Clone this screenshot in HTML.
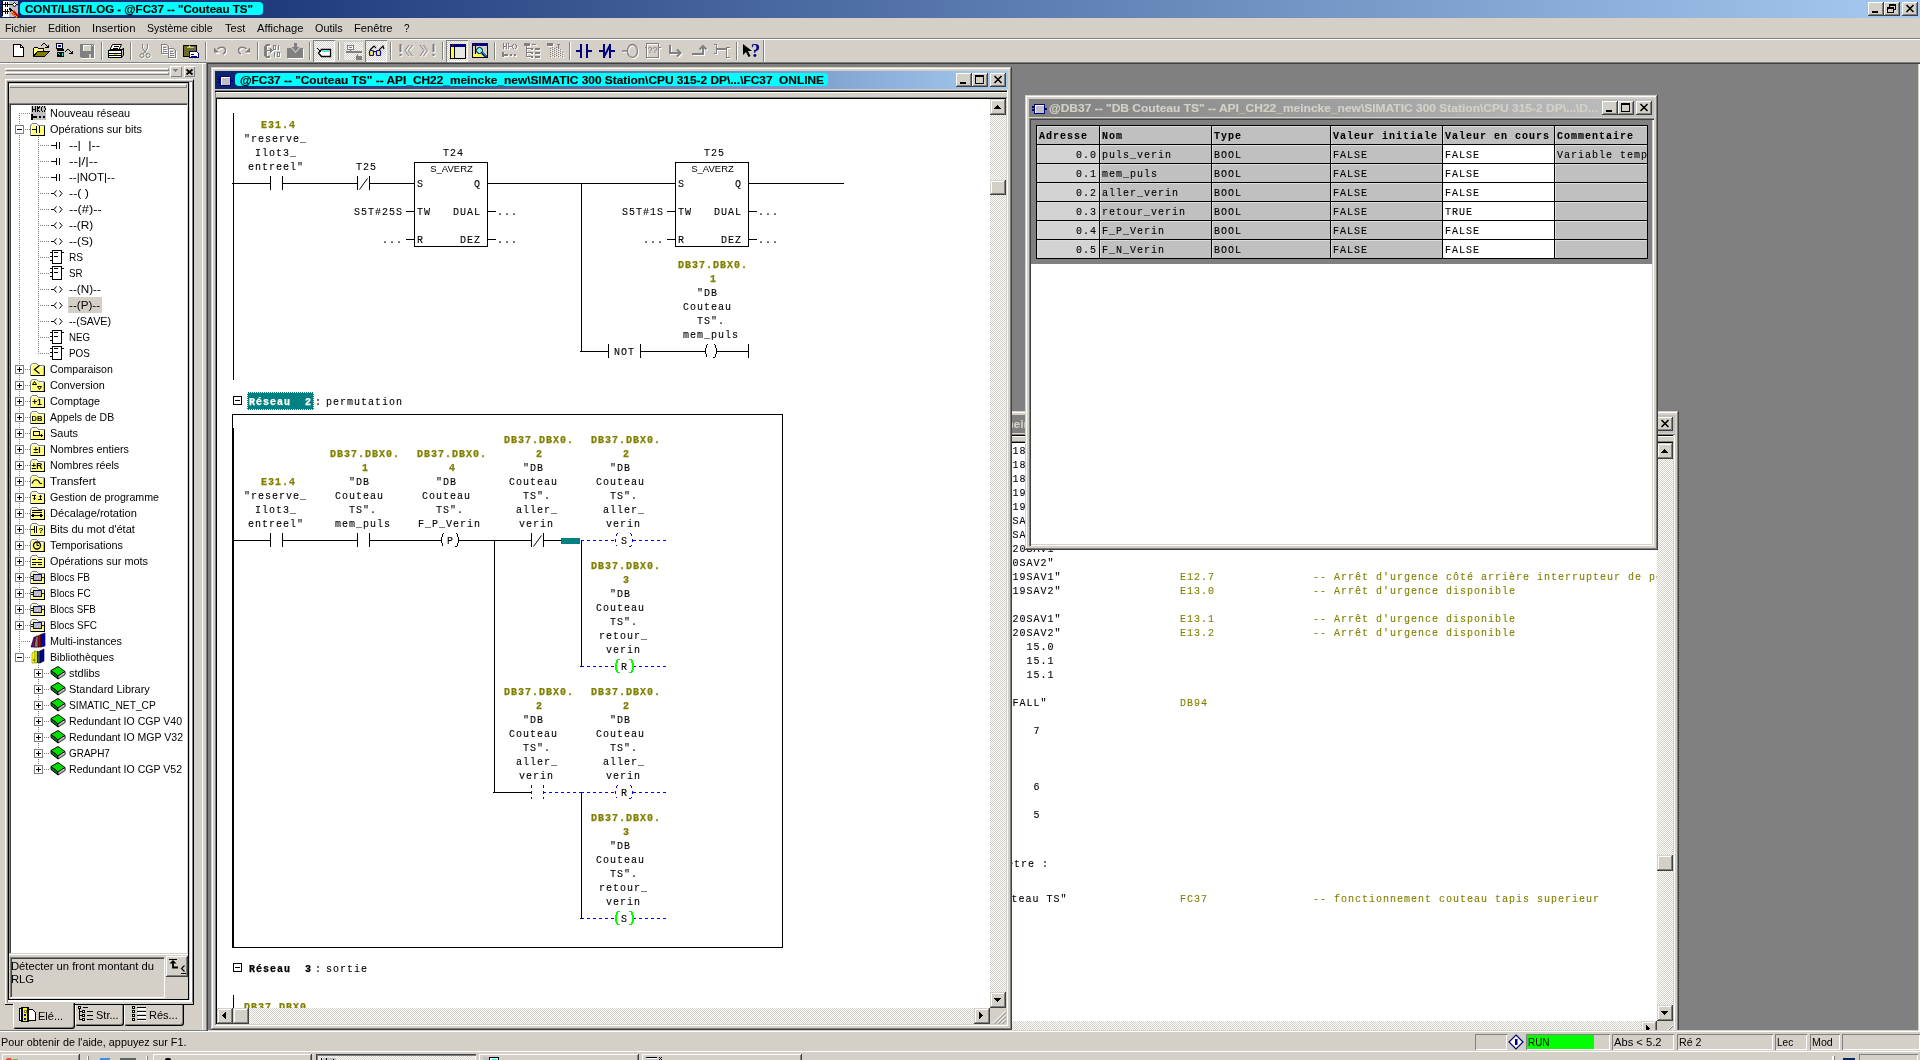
<!DOCTYPE html>
<html lang="fr">
<head>
<meta charset="utf-8">
<title>CONT/LIST/LOG - @FC37 -- "Couteau TS"</title>
<style>
*{box-sizing:border-box;margin:0;padding:0}
html,body{width:1920px;height:1060px;overflow:hidden;background:#d4d0c8}
body{position:relative;font:11px "Liberation Sans",sans-serif;color:#000;cursor:default}
.a{position:absolute}
.t{position:absolute;white-space:pre;line-height:14px;height:14px}
.m{position:absolute;white-space:pre;font:10px/14px "Liberation Mono",monospace;letter-spacing:1px;padding-top:1px;-webkit-text-stroke:.1px}
.mb{font-weight:bold;color:#808000;-webkit-text-stroke:.25px #808000}
.bb{font-weight:bold;-webkit-text-stroke:.25px}
.ol{color:#808000}
.t[style*="font-weight:bold"]{-webkit-text-stroke:.15px}
.c{text-align:center}
.face{background:#d4d0c8}
.dith{background-color:#fff;background-image:conic-gradient(#d4d0c8 25%,#fff 0 50%,#d4d0c8 0 75%,#fff 0);background-size:2px 2px}
.btn{position:absolute;background:#d4d0c8;box-shadow:inset -1px -1px 0 #404040,inset 1px 1px 0 #fff,inset -2px -2px 0 #808080}
.sbtn{position:absolute;background:#d4d0c8;box-shadow:inset -1px -1px 0 #404040,inset 1px 1px 0 #d4d0c8,inset -2px -2px 0 #808080,inset 2px 2px 0 #fff}
.win{position:absolute;background:#d4d0c8;box-shadow:inset -1px -1px 0 #404040,inset 1px 1px 0 #d4d0c8,inset -2px -2px 0 #808080,inset 2px 2px 0 #fff}
.sunk{position:absolute;box-shadow:inset 1px 1px 0 #808080,inset -1px -1px 0 #fff,inset 2px 2px 0 #404040,inset -2px -2px 0 #d4d0c8}
.sunk1{position:absolute;box-shadow:inset 1px 1px 0 #808080,inset -1px -1px 0 #fff}
.sep{position:absolute;width:2px;height:18px;top:42px;border-left:1px solid #808080;border-right:1px solid #fff}
svg{position:absolute;overflow:visible}
.ce{shape-rendering:crispEdges}
</style>
</head>
<body>
<div id="root" style="position:absolute;left:0;top:0;width:1920px;height:1060px;overflow:hidden;will-change:transform">
<!-- ===== application title bar ===== -->
<div class="a" id="apptitle" style="left:0;top:0;width:1920px;height:18px;background:linear-gradient(90deg,#0a246a 0%,#a6caf0 100%)"></div>
<svg class="ce" style="left:2px;top:1px" width="17" height="17" viewBox="0 0 17 17">
<rect x="0" y="0" width="16" height="16" fill="#c0c0c0"/>
<rect x="1" y="0" width="6" height="16" fill="#fff"/>
<path d="M0 0h1v15h-1zM1 3h10v1h-10zM3 1h1v5h-1zM5 1h1v5h-1zM1 10h6v1h-6zM3 8h1v5h-1zM5 8h1v5h-1zM14 3h2v1h-2z" fill="#000"/>
<path d="M12.500 1.500l2 2l-2 2.500l-2-2.500z" fill="#fff" stroke="#000" shape-rendering="auto"/>
<path d="M7 7h2v1h1v1h1v1h-2v1h-1v-2h-1z" fill="#000"/>
<path d="M10.500 10.500l5 5.500" stroke="#e00000" stroke-width="4" shape-rendering="auto"/>
<path d="M10 11l5 5.500" stroke="#ffee00" stroke-width="1.500" stroke-dasharray="1 1" shape-rendering="auto"/>
<path d="M12 10.500l4.500 5" stroke="#400000" stroke-width="1" stroke-dasharray="1 1" shape-rendering="auto"/>
</svg>
<div class="a" style="left:20px;top:2px;width:243px;height:13px;background:#0ff;border-radius:4px"></div>
<div class="t" style="transform:scaleX(1.0491);transform-origin:0 0;left:25px;top:2px;font-weight:bold">CONT/LIST/LOG - @FC37 -- "Couteau TS"</div>
<div class="btn" style="left:1868px;top:2px;width:16px;height:14px"><div class="a" style="left:4px;top:9px;width:6px;height:2px;background:#000"></div></div>
<div class="btn" style="left:1884px;top:2px;width:16px;height:14px">
<svg class="ce" style="left:3px;top:2px" width="10" height="10" viewBox="0 0 10 10"><path d="M2.5 2.5V.5h6v5h-2M2.5 1.5h6M.5 3.5h6v5h-6zM.5 4.5h6" stroke="#000" fill="none"/></svg></div>
<div class="btn" style="left:1902px;top:2px;width:16px;height:14px">
<svg style="left:4px;top:3px" width="8" height="7" viewBox="0 0 8 7"><path d="M.5 0l7 7M7.5 0l-7 7" stroke="#000" stroke-width="1.6" fill="none"/></svg></div>

<!-- ===== menu bar ===== -->
<div class="a face" style="left:0;top:18px;width:1920px;height:20px"></div>
<div class="t" style="transform:scaleX(0.9480);transform-origin:0 0;left:5px;top:21px">Fichier</div>
<div class="t" style="transform:scaleX(0.9661);transform-origin:0 0;left:48px;top:21px">Edition</div>
<div class="t" style="transform:scaleX(1.0307);transform-origin:0 0;left:92px;top:21px">Insertion</div>
<div class="t" style="transform:scaleX(0.9564);transform-origin:0 0;left:147px;top:21px">Système cible</div>
<div class="t" style="transform:scaleX(1.0056);transform-origin:0 0;left:225px;top:21px">Test</div>
<div class="t" style="transform:scaleX(1.0203);transform-origin:0 0;left:257px;top:21px">Affichage</div>
<div class="t" style="transform:scaleX(0.9813);transform-origin:0 0;left:315px;top:21px">Outils</div>
<div class="t" style="transform:scaleX(1.0179);transform-origin:0 0;left:354px;top:21px">Fenêtre</div>
<div class="t" style="transform:scaleX(0.8980);transform-origin:0 0;left:404px;top:21px">?</div>
<div class="a" style="left:0;top:38px;width:1920px;height:1px;background:#808080"></div>
<div class="a" style="left:0;top:39px;width:1920px;height:1px;background:#fff"></div>

<!-- ===== toolbar ===== -->
<div class="a face" id="toolbar" style="left:0;top:40px;width:1920px;height:22px"></div>
<div class="sep" style="left:101px"></div>
<div class="sep" style="left:130px"></div>
<div class="sep" style="left:205px"></div>
<div class="sep" style="left:257px"></div>
<div class="sep" style="left:309px"></div>
<div class="sep" style="left:338px"></div>
<div class="sep" style="left:390px"></div>
<div class="sep" style="left:442px"></div>
<div class="sep" style="left:494px"></div>
<div class="sep" style="left:569px"></div>
<div class="sep" style="left:736px"></div>
<div class="sep" style="left:763px;top:40px;height:22px"></div>
<div class="a dith" style="left:313px;top:40px;width:22px;height:22px;box-shadow:inset 1px 1px 0 #808080,inset -1px -1px 0 #fff"></div>
<div class="a dith" style="left:365px;top:40px;width:22px;height:22px;box-shadow:inset 1px 1px 0 #808080,inset -1px -1px 0 #fff"></div>
<div class="a dith" style="left:446px;top:40px;width:22px;height:22px;box-shadow:inset 1px 1px 0 #808080,inset -1px -1px 0 #fff"></div>
<div class="a dith" style="left:344px;top:42px;width:19px;height:18px"></div>
<svg class="ce" style="left:13px;top:43px" width="12" height="15" viewBox="0 0 12 15"><path d="M.5 1.500h7l3 3v9h-10z" fill="#fff" stroke="#000"/><path d="M7.500 1.500v3h3" fill="none" stroke="#000"/></svg>
<svg class="ce" style="left:33px;top:43px" width="17" height="15" viewBox="0 0 17 15"><path d="M.5 13.500v-8l1-1h3l1 1h5v3" fill="#ffff80" stroke="#000"/><path d="M.5 13.500l4-5h12l-5 5z" fill="#808000" stroke="#000"/><path d="M8 2h1v1h-1zM9 1h1v1h-1zM10 0h2v1h-2zM12 1h1v1h-1zM13 2h1v1h-1zM14 3h1v1h-1zM15 2h1v3h-1zM12 4h3v1h-3zM14 3h1v1h-1z" fill="#000"/></svg>
<svg class="ce" style="left:55px;top:43px" width="18" height="15" viewBox="0 0 18 15"><rect x="1.500" y=".5" width="6" height="5" rx="1" fill="#fff" stroke="#000" stroke-width="1.400"/><rect x="3" y="2" width="3" height="2" fill="#0000ff"/><path d="M2 7h7" stroke="#000" stroke-width="1.400"/><rect x="2" y="9" width="7" height="5" fill="#000"/><path d="M3.500 10.500l2 2M7.500 10v3" stroke="#00ffff" stroke-width="1"/><path d="M10 8h1v1h-1zM11 7h1v1h-1zM12 6h2v1h-2zM14 7h1v1h-1zM15 8h1v1h-1zM16 9h1v1h-1zM17 8h1v3h-1zM14 10h3v1h-3z" fill="#000"/></svg>
<svg class="ce" style="left:80px;top:44px" width="16" height="16" viewBox="0 0 16 16"><rect x="1" y="1" width="14" height="14" fill="#fff"/><path d="M0 0h14v14h-13l-1-1z" fill="#808080"/><rect x="3" y="1" width="8" height="6" fill="#d4d0c8" stroke="#fff" stroke-width="0"/><path d="M3 1h8v1h-8zM3 1h1v6h-1z" fill="#fff"/><rect x="9" y="10" width="2" height="4" fill="#d4d0c8"/><rect x="12" y="1" width="1" height="1" fill="#fff"/></svg>
<svg class="ce" style="left:108px;top:44px" width="17" height="15" viewBox="0 0 17 15"><path d="M4.500 .5h9l-2.500 5h-9z" fill="#fff" stroke="#000" shape-rendering="auto"/><path d="M6 2.500h5M5 4.500h5" stroke="#000"/><path d="M13.500 6.500l2-2.500v7l-2 2.500z" fill="#c0c0c0" stroke="#000" shape-rendering="auto"/><path d="M.5 6.500h13v7h-13z" fill="#fff" stroke="#000"/><path d="M1 9.500h12M1 11.500h12" stroke="#000"/><path d="M6 10.500h3" stroke="#e0e000"/><path d="M11 6h3v-1h-3z" fill="#000"/></svg>
<svg style="left:139px;top:44px" width="13" height="15" viewBox="0 0 13 15"><g transform="translate(1,1)" stroke="#fff" fill="none" stroke-width="1"><path d="M3.500 0v4l3 4.500M8.500 0v4l-3 4.500M5.500 8.500l-2 1.500M6.500 8.500l2 1.500"/><circle cx="3" cy="11.500" r="2"/><circle cx="9" cy="11.500" r="2"/></g><g stroke="#808080" fill="none" stroke-width="1"><path d="M3.500 0v4l3 4.500M8.500 0v4l-3 4.500M5.500 8.500l-2 1.500M6.500 8.500l2 1.500"/><circle cx="3" cy="11.500" r="2"/><circle cx="9" cy="11.500" r="2"/></g></svg>
<svg class="ce" style="left:161px;top:44px" width="17" height="15" viewBox="0 0 17 15"><g transform="translate(1,1)" stroke="#fff" fill="none" stroke-width="1"><path d="M.5 .5h5l2 2v7h-7zM2 3.500h3M2 5.500h4M2 7.500h4"/><path d="M7.500 4.500h5l2 2v7h-7zM9 7.500h3M9 9.500h4M9 11.500h4"/></g><g stroke="#808080" fill="none" stroke-width="1"><path d="M.5 .5h5l2 2v7h-7zM2 3.500h3M2 5.500h4M2 7.500h4"/><path d="M7.500 4.500h5l2 2v7h-7zM9 7.500h3M9 9.500h4M9 11.500h4"/></g></svg>
<svg class="ce" style="left:183px;top:44px" width="17" height="15" viewBox="0 0 17 15"><rect x=".5" y="1.500" width="13" height="11" rx="1" fill="#6b6b2a" stroke="#000" stroke-width="1.300"/><path d="M4 3.500l2.500-3l2.500 3z" fill="#ffff00" stroke="#808000" stroke-width=".6"/><path d="M3.500 3.500h7" stroke="#c0c0c0"/><path d="M6.500 7.500h7l2 2v4h-9z" fill="#fff" stroke="#000080" stroke-width="1.300"/><path d="M8 10.500h3M8 12.500h6" stroke="#000080"/></svg>
<svg style="left:214px;top:46px" width="15" height="11" viewBox="0 0 15 11"><g transform="translate(1,1)" stroke="#fff" fill="none" stroke-width="1.4"><path d="M3.500 3C6 .5 11.500 .5 11.500 4.500C11.500 6.500 10.500 7.500 9 8"/></g><g stroke="#808080" fill="none" stroke-width="1.4"><path d="M3.500 3C6 .5 11.500 .5 11.500 4.500C11.500 6.500 10.500 7.500 9 8"/></g><path d="M1 2.500v4.500h4.500z" fill="#fff" transform="translate(1,1)"/><path d="M0 1.500v5h5z" fill="#808080"/></svg>
<svg style="left:235px;top:46px" width="15" height="11" viewBox="0 0 15 11"><g transform="translate(1,1)" stroke="#fff" fill="none" stroke-width="1.4"><path d="M11.500 3C9 .5 3.500 .5 3.500 4.500C3.500 6.500 4.500 7.500 6 8"/></g><g stroke="#808080" fill="none" stroke-width="1.4"><path d="M11.500 3C9 .5 3.500 .5 3.500 4.500C3.500 6.500 4.500 7.500 6 8"/></g><path d="M14 2.500v4.500h-4.500z" fill="#fff" transform="translate(1,1)"/><path d="M15 1.500v5h-5z" fill="#808080"/></svg>
<svg class="ce" style="left:264px;top:44px" width="18" height="15" viewBox="0 0 18 15"><g transform="translate(1,1)" fill="#fff" stroke="#fff"><path d="M0 2h3v10h-3zM2 0h4v2h-4zM2 12h4v2h-4zM1 1h2v1h-2zM1 12h2v1h-2z" stroke-width="0"/></g><g fill="#808080" stroke="#808080"><path d="M0 2h3v10h-3zM2 0h4v2h-4zM2 12h4v2h-4zM1 1h2v1h-2zM1 12h2v1h-2z" stroke-width="0"/></g><g transform="translate(1,1)" stroke="#fff" fill="none" stroke-width="1"><path d="M3 6.500h5M6 4.500l2 2l-2 2"/></g><g stroke="#808080" fill="none" stroke-width="1"><path d="M3 6.500h5M6 4.500l2 2l-2 2"/></g><g transform="translate(1,1)" stroke="#fff" fill="none" stroke-width="1"><path d="M9.500 1.500h2v4h-2zM14.500 1v5M10.500 8v5M13.500 8.500h2v4h-2z"/></g><g stroke="#808080" fill="none" stroke-width="1"><path d="M9.500 1.500h2v4h-2zM14.500 1v5M10.500 8v5M13.500 8.500h2v4h-2z"/></g></svg>
<svg style="left:287px;top:43px" width="18" height="16" viewBox="0 0 18 16"><path d="M1 6h16v10h-16z" fill="#fff"/><path d="M0 5h16v10h-16z" fill="#808080"/><path d="M4 5l4.500 5l4.500-5z" fill="#d4d0c8"/><path d="M7 0h3v4h2.500l-4 4.500l-4-4.500h2.500z" fill="#808080"/></svg>
<svg class="ce" style="left:317px;top:47px" width="15" height="11" viewBox="0 0 15 11"><path d="M4.500 2.500h9v7h-9l-3-3.500z" fill="#fff" stroke="#000" stroke-width="1.300" shape-rendering="auto"/><path d="M0 1l4 4" stroke="#000" shape-rendering="auto"/><path d="M5 4.500h7" stroke="#00ffff" stroke-width="1.200"/></svg>
<svg class="ce" style="left:345px;top:44px" width="18" height="16" viewBox="0 0 18 16"><rect x="2.500" y="1.500" width="6" height="4" rx="1" fill="#fff" stroke="#808080" stroke-width="1.300"/><rect x="4" y="3" width="3" height="1" fill="#808080"/><path d="M5.500 6v2" stroke="#808080"/><path d="M1 7h16v2h-16z" fill="#808080"/><path d="M12.500 10v2" stroke="#808080"/><rect x="11" y="12" width="6" height="4" fill="#808080"/></svg>
<svg class="ce" style="left:368px;top:45px" width="18" height="12" viewBox="0 0 18 12"><path d="M2 5l4-4l2 2M11 5l4-4l1 3" fill="none" stroke="#000" stroke-width="1.200" shape-rendering="auto"/><rect x="1.500" y="5.500" width="4" height="5" rx="1" fill="#ffff00" stroke="#0000c0" stroke-width="1.200" shape-rendering="auto"/><rect x="8.500" y="5.500" width="4" height="5" rx="1" fill="#ffff00" stroke="#0000c0" stroke-width="1.200" shape-rendering="auto"/><path d="M5.500 6.500h2" stroke="#000"/></svg>
<svg style="left:399px;top:44px" width="19" height="14" viewBox="0 0 19 14"><g transform="translate(1,1)" stroke="#fff" fill="none" stroke-width="2"><path d="M1.500 0v8M1.500 10v2" stroke-width="2"/></g><g stroke="#808080" fill="none" stroke-width="2"><path d="M1.500 0v8M1.500 10v2" stroke-width="2"/></g><g transform="translate(1,1)" stroke="#fff" fill="none" stroke-width="1"><path d="M10 1l-4 5.500l4 5.500M13.500 1l-4 5.500l4 5.500"/></g><g stroke="#808080" fill="none" stroke-width="1"><path d="M10 1l-4 5.500l4 5.500M13.500 1l-4 5.500l4 5.500"/></g></svg>
<svg style="left:419px;top:44px" width="18" height="14" viewBox="0 0 18 14"><g transform="translate(1,1)" stroke="#fff" fill="none" stroke-width="2"><path d="M14.500 0v8M14.500 10v2" stroke-width="2"/></g><g stroke="#808080" fill="none" stroke-width="2"><path d="M14.500 0v8M14.500 10v2" stroke-width="2"/></g><g transform="translate(1,1)" stroke="#fff" fill="none" stroke-width="1"><path d="M1 1l4 5.500l-4 5.500M4.500 1l4 5.500l-4 5.500"/></g><g stroke="#808080" fill="none" stroke-width="1"><path d="M1 1l4 5.500l-4 5.500M4.500 1l4 5.500l-4 5.500"/></g></svg>
<svg class="ce" style="left:450px;top:44px" width="16" height="15" viewBox="0 0 16 15"><rect x=".5" y=".5" width="15" height="14" fill="#e9e7e3" stroke="#000" stroke-width="1.200"/><rect x="0" y="0" width="16" height="3" fill="#000080"/><rect x="2" y="1" width="1" height="1" fill="#ff0000"/><rect x="1" y="3" width="3" height="11" fill="#ffff40"/><path d="M4.500 3v11" stroke="#000"/></svg>
<svg class="ce" style="left:472px;top:43px" width="16" height="15" viewBox="0 0 16 15"><rect x=".5" y=".5" width="15" height="14" fill="#d4d0c8" stroke="#000" stroke-width="1.200"/><rect x="0" y="0" width="16" height="3" fill="#000080"/><rect x="2" y="1" width="1" height="1" fill="#ff0000"/><rect x="1" y="11" width="14" height="3" fill="#ffff40"/><path d="M3.500 3v8" stroke="#000"/><circle cx="7.500" cy="7.500" r="3" fill="#80ffff" stroke="#000" shape-rendering="auto"/><path d="M10 10l4.500 4" stroke="#000080" stroke-width="2.500" shape-rendering="auto"/><path d="M10.500 10l4 3.500" stroke="#00c0ff" stroke-width="1" shape-rendering="auto"/></svg>
<svg class="ce" style="left:502px;top:43px" width="17" height="15" viewBox="0 0 17 15"><g transform="translate(1,1)" stroke="#fff" fill="none" stroke-width="1"><path d="M1.500 0v6M4.500 0v6M1.500 3.500h3M6.500 0v6M6.500 3.500h3M11.500 1c-1.500 1.500-1.500 3.500 0 5M13.500 1c1.500 1.500 1.500 3.500 0 5"/></g><g stroke="#808080" fill="none" stroke-width="1"><path d="M1.500 0v6M4.500 0v6M1.500 3.500h3M6.500 0v6M6.500 3.500h3M11.500 1c-1.500 1.500-1.500 3.500 0 5M13.500 1c1.500 1.500 1.500 3.500 0 5"/></g><g transform="translate(1,1)" fill="#fff" stroke="#fff"><path d="M0 9h2v5h-2zM2 11h4v1.500h-4zM8 11h2v1.500h-2zM12 11h2v1.500h-2z" stroke-width="0"/></g><g fill="#808080" stroke="#808080"><path d="M0 9h2v5h-2zM2 11h4v1.500h-4zM8 11h2v1.500h-2zM12 11h2v1.500h-2z" stroke-width="0"/></g></svg>
<svg class="ce" style="left:524px;top:43px" width="18" height="16" viewBox="0 0 18 16"><g transform="translate(1,1)" fill="#fff" stroke="#fff"><path d="M0 0h6v3h-6zM6 4.500h3v2h-3zM11 5h5v2h-5zM6 8.500h3v2h-3zM11 9h5v2h-5zM6 12.500h3v2h-3zM11 13h5v2h-5z" stroke-width="0"/></g><g fill="#808080" stroke="#808080"><path d="M0 0h6v3h-6zM6 4.500h3v2h-3zM11 5h5v2h-5zM6 8.500h3v2h-3zM11 9h5v2h-5zM6 12.500h3v2h-3zM11 13h5v2h-5z" stroke-width="0"/></g><g transform="translate(1,1)" stroke="#fff" fill="none" stroke-width="1"><path d="M2.500 3v10.500h3M2.500 5.500h3M2.500 9.500h3M8 2l4-1"/></g><g stroke="#808080" fill="none" stroke-width="1"><path d="M2.500 3v10.500h3M2.500 5.500h3M2.500 9.500h3M8 2l4-1"/></g></svg>
<svg class="ce" style="left:547px;top:43px" width="18" height="16" viewBox="0 0 18 16"><g transform="translate(1,1)" fill="#fff" stroke="#fff"><path d="M0 0h6v3h-6z" stroke-width="0"/></g><g fill="#808080" stroke="#808080"><path d="M0 0h6v3h-6z" stroke-width="0"/></g><rect x="3" y="4" width="14" height="11" fill="#808080" style="mask:none" opacity="0"/><g fill="#808080"><path d="M3 5h1v1h-1zM5 4h1v1h-1zM7 5h1v1h-1zM9 4h1v1h-1zM5 6h1v1h-1zM7 7h1v1h-1zM9 6h1v1h-1zM11 5h1v1h-1zM3 7h1v1h-1zM3 9h1v1h-1zM5 8h1v1h-1zM5 10h1v1h-1zM7 9h1v1h-1zM9 8h1v1h-1zM9 10h1v1h-1zM11 7h1v1h-1zM11 9h1v1h-1zM13 6h1v1h-1zM13 8h1v1h-1zM13 10h1v1h-1zM3 11h1v1h-1zM3 13h1v1h-1zM5 12h1v1h-1zM7 11h1v1h-1zM7 13h1v1h-1zM9 12h1v1h-1zM11 11h1v1h-1zM11 13h1v1h-1zM13 12h1v1h-1zM15 9h1v1h-1zM15 11h1v1h-1zM15 13h1v1h-1zM10 1h3v1h-3zM11 2h1v3h-1z"/></g><g fill="#fff"><path d="M4 6h1v1h-1zM6 5h1v1h-1zM8 6h1v1h-1zM10 5h1v1h-1zM6 7h1v1h-1zM8 8h1v1h-1zM10 7h1v1h-1zM12 6h1v1h-1zM4 8h1v1h-1zM4 10h1v1h-1zM6 9h1v1h-1zM6 11h1v1h-1zM8 10h1v1h-1zM10 9h1v1h-1zM10 11h1v1h-1zM12 8h1v1h-1zM12 10h1v1h-1zM14 7h1v1h-1zM14 9h1v1h-1zM14 11h1v1h-1zM4 12h1v1h-1zM4 14h1v1h-1zM6 13h1v1h-1zM8 12h1v1h-1zM8 14h1v1h-1zM10 13h1v1h-1zM12 12h1v1h-1zM12 14h1v1h-1zM14 13h1v1h-1zM16 10h1v1h-1zM16 12h1v1h-1zM16 14h1v1h-1z"/></g></svg>
<svg class="ce" style="left:576px;top:44px" width="16" height="14" viewBox="0 0 16 14"><path d="M0 6h5v2h-5zM4 0h2v14h-2zM10 0h2v14h-2zM11 6h5v2h-5z" fill="#000080"/></svg>
<svg class="ce" style="left:599px;top:44px" width="16" height="14" viewBox="0 0 16 14"><path d="M0 6h5v2h-5zM4 0h2v14h-2zM10 0h2v14h-2zM11 6h5v2h-5z" fill="#000080"/><path d="M5.500 12l5-10" stroke="#000080" stroke-width="2" shape-rendering="auto"/></svg>
<svg style="left:622px;top:44px" width="18" height="15" viewBox="0 0 18 15"><g transform="translate(1,1)" stroke="#fff" fill="none" stroke-width="1.5"><path d="M0 7h5" stroke-width="1.500"/></g><g stroke="#808080" fill="none" stroke-width="1.5"><path d="M0 7h5" stroke-width="1.500"/></g><g transform="translate(1,1)" stroke="#fff" fill="none" stroke-width="1.3"><ellipse cx="10.500" cy="7" rx="5" ry="6.500" stroke-width="1.300"/></g><g stroke="#808080" fill="none" stroke-width="1.3"><ellipse cx="10.500" cy="7" rx="5" ry="6.500" stroke-width="1.300"/></g></svg>
<svg class="ce" style="left:645px;top:43px" width="17" height="16" viewBox="0 0 17 16"><g transform="translate(1,1)" stroke="#fff" fill="none" stroke-width="1"><path d="M1.500 .5h12v14h-12zM0 4.500h1.500M13.500 4.500h2"/></g><g stroke="#808080" fill="none" stroke-width="1"><path d="M1.500 .5h12v14h-12zM0 4.500h1.500M13.500 4.500h2"/></g><text x="7.500" y="9.500" font-family="Liberation Sans,sans-serif" font-size="9" text-anchor="middle" fill="#808080">??</text></svg>
<svg style="left:668px;top:45px" width="16" height="14" viewBox="0 0 16 14"><g transform="translate(1,1)" stroke="#fff" fill="none" stroke-width="2"><path d="M2 0v8h10M9 4.500l3.500 3.500l-3.500 3.500" stroke-width="2"/></g><g stroke="#808080" fill="none" stroke-width="2"><path d="M2 0v8h10M9 4.500l3.500 3.500l-3.500 3.500" stroke-width="2"/></g></svg>
<svg style="left:692px;top:45px" width="17" height="12" viewBox="0 0 17 12"><g transform="translate(1,1)" stroke="#fff" fill="none" stroke-width="2"><path d="M0 9h11v-8M7.500 4.500l3.500-3.500l3.500 3.500" stroke-width="2"/></g><g stroke="#808080" fill="none" stroke-width="2"><path d="M0 9h11v-8M7.500 4.500l3.500-3.500l3.500 3.500" stroke-width="2"/></g></svg>
<svg class="ce" style="left:714px;top:44px" width="18" height="15" viewBox="0 0 18 15"><g transform="translate(1,1)" stroke="#fff" fill="none" stroke-width="1.3"><path d="M0 .5h2.500v9h-2.500M2.500 5h10M16 3.500h-3.500v10h3.500" stroke-width="1.300"/></g><g stroke="#808080" fill="none" stroke-width="1.3"><path d="M0 .5h2.500v9h-2.500M2.500 5h10M16 3.500h-3.500v10h3.500" stroke-width="1.300"/></g></svg>
<svg style="left:742px;top:43px" width="18" height="16" viewBox="0 0 18 16"><path d="M1 1v11l3-3l2.500 5l2-1l-2.500-5h4z" fill="#000" shape-rendering="auto"/><text x="13.500" y="14" font-family="Liberation Serif,serif" font-size="19" font-weight="bold" text-anchor="middle" fill="#000080">?</text></svg>

<div class="a" style="left:0;top:62px;width:1920px;height:1px;background:#808080"></div>
<div class="a" style="left:0;top:63px;width:208px;height:1px;background:#fff"></div>
<!-- ===== MDI client area ===== -->
<div class="a" id="mdi" style="left:206px;top:62px;width:1714px;height:970px;background:#808080;overflow:hidden;">
<div class="a" style="left:-206px;top:-62px;width:1920px;height:1060px">
<!-- ===== background editor window (inactive) ===== -->
<div class="win" id="win3" style="left:880px;top:411px;width:799px;height:640px"></div>
<div class="a" style="left:884px;top:415px;width:791px;height:18px;background:linear-gradient(90deg,#808080 0%,#808080 17%,#c0c0c0 100%)"></div>
<div class="t" style="left:1003px;top:417px;font-weight:bold;color:#d4d0c8;transform:scaleX(1.086);transform-origin:0 0">meincke_new\SIMATIC 300 Station\CPU 315-2 DP\...\FC...</div>
<div class="btn" style="left:1657px;top:417px;width:16px;height:14px">
<svg style="left:4px;top:3px" width="8" height="7" viewBox="0 0 8 7"><path d="M.5 0l7 7M7.5 0l-7 7" stroke="#000" stroke-width="1.6" fill="none"/></svg></div>
<div class="a" style="left:884px;top:434px;width:791px;height:1px;background:#808080"></div>
<div class="a" style="left:884px;top:435px;width:789px;height:1px;background:#000"></div>
<div class="a" style="left:884px;top:436px;width:791px;height:1px;background:#fff"></div>
<div class="a" style="left:884px;top:441px;width:791px;height:1px;background:#808080"></div>
<div class="a" style="left:884px;top:442px;width:789px;height:1px;background:#000"></div>
<div class="a" style="left:886px;top:443px;width:771px;height:590px;background:#fff;overflow:hidden">
<div class="a" style="left:-886px;top:-443px">
<div class="m" style="left:1012.5px;top:444px">18</div>
<div class="m" style="left:1012.5px;top:458px">18</div>
<div class="m" style="left:1012.5px;top:472px">18</div>
<div class="m" style="left:1012.5px;top:486px">19</div>
<div class="m" style="left:1012.5px;top:500px">19</div>
<div class="m" style="left:1012.5px;top:514px">SA</div>
<div class="m" style="left:1012.5px;top:528px">SA</div>
<div class="m" style="left:1012.5px;top:542px">20SAV1"</div>
<div class="m" style="left:1012.5px;top:556px">0SAV2"</div>
<div class="m" style="left:1012.5px;top:570px">19SAV1"</div>
<div class="m ol" style="left:1180px;top:570px">E12.7</div>
<div class="m ol" style="left:1313px;top:570px">-- Arrêt d'urgence côté arrière interrupteur de position</div>
<div class="m" style="left:1012.5px;top:584px">19SAV2"</div>
<div class="m ol" style="left:1180px;top:584px">E13.0</div>
<div class="m ol" style="left:1313px;top:584px">-- Arrêt d'urgence disponible</div>
<div class="m" style="left:1012.5px;top:612px">20SAV1"</div>
<div class="m ol" style="left:1180px;top:612px">E13.1</div>
<div class="m ol" style="left:1313px;top:612px">-- Arrêt d'urgence disponible</div>
<div class="m" style="left:1012.5px;top:626px">20SAV2"</div>
<div class="m ol" style="left:1180px;top:626px">E13.2</div>
<div class="m ol" style="left:1313px;top:626px">-- Arrêt d'urgence disponible</div>
<div class="m" style="left:1012.5px;top:640px">  15.0</div>
<div class="m" style="left:1012.5px;top:654px">  15.1</div>
<div class="m" style="left:1012.5px;top:668px">  15.1</div>
<div class="m" style="left:1012.5px;top:696px">FALL"</div>
<div class="m ol" style="left:1180px;top:696px">DB94</div>
<div class="m" style="left:1012.5px;top:724px">   7</div>
<div class="m" style="left:1012.5px;top:780px">   6</div>
<div class="m" style="left:1012.5px;top:808px">   5</div>
<div class="m" style="left:1007px;top:857px">ètre :</div>
<div class="m" style="left:1011.5px;top:892px">teau TS"</div>
<div class="m ol" style="left:1180px;top:892px">FC37</div>
<div class="m ol" style="left:1313px;top:892px">-- fonctionnement couteau tapis superieur</div>

</div></div>
<div class="a dith" style="left:1657px;top:443px;width:16px;height:578px"></div>
<div class="sbtn" style="left:1657px;top:443px;width:16px;height:16px"><svg class="ce" style="left:4px;top:6px" width="7" height="4" viewBox="0 0 7 4"><path d="M3 0h1v1h-1zM2 1h3v1h-3zM1 2h5v1h-5zM0 3h7v1h-7z" fill="#000"/></svg></div>
<div class="sbtn" style="left:1657px;top:855px;width:16px;height:16px"></div>
<div class="sbtn" style="left:1657px;top:1005px;width:16px;height:16px"><svg class="ce" style="left:4px;top:6px" width="7" height="4" viewBox="0 0 7 4"><path d="M0 0h7v1h-7zM1 1h5v1h-5zM2 2h3v1h-3zM3 3h1v1h-1z" fill="#000"/></svg></div>
<div class="a dith" style="left:886px;top:1021px;width:771px;height:16px"></div>
<div class="sbtn" style="left:1641px;top:1021px;width:16px;height:16px"><svg class="ce" style="left:5px;top:4px" width="4" height="7" viewBox="0 0 4 7"><path d="M0 0h1v7h-1zM1 1h1v5h-1zM2 2h1v3h-1zM3 3h1v1h-1z" fill="#000"/></svg></div>
<div class="a face" style="left:1657px;top:1021px;width:16px;height:16px"></div>
<svg class="ce" style="left:1661px;top:1025px" width="12" height="12" viewBox="0 0 12 12"><path d="M12 1L1 12M12 5L5 12M12 9L9 12" stroke="#808080"/><path d="M12 0L0 12M12 4L4 12M12 8L8 12" stroke="#fff"/></svg>
<div class="a" style="left:1673px;top:435px;width:1px;height:600px;background:#d4d0c8"></div>
<div class="a" style="left:1674px;top:435px;width:1px;height:600px;background:#fff"></div>

<!-- ===== DB37 window (inactive) ===== -->
<div class="win" id="db37" style="left:1025px;top:95px;width:633px;height:455px"></div>
<div class="a" style="left:1029px;top:99px;width:625px;height:18px;background:linear-gradient(90deg,#808080 0%,#c0c0c0 100%)"></div>
<svg class="ce" style="left:1032px;top:104px" width="15" height="10" viewBox="0 0 15 10"><rect x="2.5" y=".5" width="10" height="9" fill="#c0c0c0" stroke="#000080" stroke-width="1.4"/><path d="M3.5 8.5v-7h8" stroke="#fff" fill="none"/><path d="M0 3h2M0 6h2M13 5h2" stroke="#000080" stroke-width="2"/></svg>
<div class="t" style="transform:scaleX(1.0905);transform-origin:0 0;left:1049px;top:101px;font-weight:bold;color:#d4d0c8">@DB37 -- "DB Couteau TS" -- API_CH22_meincke_new\SIMATIC 300 Station\CPU 315-2 DP\...\D...</div>
<div class="btn" style="left:1602px;top:101px;width:16px;height:14px"><div class="a" style="left:4px;top:9px;width:6px;height:2px;background:#000"></div></div>
<div class="btn" style="left:1618px;top:101px;width:16px;height:14px"><div class="a" style="left:3px;top:2px;width:9px;height:9px;border:1px solid #000;border-top-width:2px"></div></div>
<div class="btn" style="left:1636px;top:101px;width:16px;height:14px"><svg style="left:4px;top:3px" width="8" height="7" viewBox="0 0 8 7"><path d="M.5 0l7 7M7.5 0l-7 7" stroke="#000" stroke-width="1.6" fill="none"/></svg></div>
<div class="a" style="left:1029px;top:118px;width:625px;height:428px;background:#fff;box-shadow:inset 1px 1px 0 #808080,inset 2px 2px 0 #404040,inset -1px -1px 0 #fff,inset -2px -2px 0 #d4d0c8"></div>
<div class="a" style="left:1031px;top:120px;width:621px;height:144px;background:#808080"></div>
<div class="a" style="left:1036px;top:125px;width:612px;height:134px;background:#000"></div>
<div class="m" style="left:1037px;top:126px;width:62px;height:18px;line-height:19px;background:#c0c0c0;box-shadow:inset 1px 1px 0 #dcdcdc;padding-left:2px;font-weight:bold;overflow:hidden">Adresse</div>
<div class="m" style="left:1100px;top:126px;width:111px;height:18px;line-height:19px;background:#c0c0c0;box-shadow:inset 1px 1px 0 #dcdcdc;padding-left:2px;font-weight:bold;overflow:hidden">Nom</div>
<div class="m" style="left:1212px;top:126px;width:118px;height:18px;line-height:19px;background:#c0c0c0;box-shadow:inset 1px 1px 0 #dcdcdc;padding-left:2px;font-weight:bold;overflow:hidden">Type</div>
<div class="m" style="left:1331px;top:126px;width:111px;height:18px;line-height:19px;background:#c0c0c0;box-shadow:inset 1px 1px 0 #dcdcdc;padding-left:2px;font-weight:bold;overflow:hidden">Valeur initiale</div>
<div class="m" style="left:1443px;top:126px;width:111px;height:18px;line-height:19px;background:#c0c0c0;box-shadow:inset 1px 1px 0 #dcdcdc;padding-left:2px;font-weight:bold;overflow:hidden">Valeur en cours</div>
<div class="m" style="left:1555px;top:126px;width:92px;height:18px;line-height:19px;background:#c0c0c0;box-shadow:inset 1px 1px 0 #dcdcdc;padding-left:2px;font-weight:bold;overflow:hidden">Commentaire</div>
<div class="m" style="left:1037px;top:145px;width:62px;height:18px;line-height:19px;background:#d3d3d3;box-shadow:inset 1px 1px 0 #dcdcdc;text-align:right;padding-right:2px;overflow:hidden">0.0</div>
<div class="m" style="left:1100px;top:145px;width:111px;height:18px;line-height:19px;background:#c0c0c0;box-shadow:inset 1px 1px 0 #dcdcdc;padding-left:2px;overflow:hidden">puls_verin</div>
<div class="m" style="left:1212px;top:145px;width:118px;height:18px;line-height:19px;background:#c0c0c0;box-shadow:inset 1px 1px 0 #dcdcdc;padding-left:2px;overflow:hidden">BOOL</div>
<div class="m" style="left:1331px;top:145px;width:111px;height:18px;line-height:19px;background:#c0c0c0;box-shadow:inset 1px 1px 0 #dcdcdc;padding-left:2px;overflow:hidden">FALSE</div>
<div class="m" style="left:1443px;top:145px;width:111px;height:18px;line-height:19px;background:#fff;padding-left:2px;overflow:hidden">FALSE</div>
<div class="m" style="left:1555px;top:145px;width:92px;height:18px;line-height:19px;background:#c0c0c0;box-shadow:inset 1px 1px 0 #dcdcdc;padding-left:2px;overflow:hidden">Variable temporaire</div>
<div class="m" style="left:1037px;top:164px;width:62px;height:18px;line-height:19px;background:#d3d3d3;box-shadow:inset 1px 1px 0 #dcdcdc;text-align:right;padding-right:2px;overflow:hidden">0.1</div>
<div class="m" style="left:1100px;top:164px;width:111px;height:18px;line-height:19px;background:#c0c0c0;box-shadow:inset 1px 1px 0 #dcdcdc;padding-left:2px;overflow:hidden">mem_puls</div>
<div class="m" style="left:1212px;top:164px;width:118px;height:18px;line-height:19px;background:#c0c0c0;box-shadow:inset 1px 1px 0 #dcdcdc;padding-left:2px;overflow:hidden">BOOL</div>
<div class="m" style="left:1331px;top:164px;width:111px;height:18px;line-height:19px;background:#c0c0c0;box-shadow:inset 1px 1px 0 #dcdcdc;padding-left:2px;overflow:hidden">FALSE</div>
<div class="m" style="left:1443px;top:164px;width:111px;height:18px;line-height:19px;background:#fff;padding-left:2px;overflow:hidden">FALSE</div>
<div class="m" style="left:1555px;top:164px;width:92px;height:18px;line-height:19px;background:#c0c0c0;box-shadow:inset 1px 1px 0 #dcdcdc;padding-left:2px;overflow:hidden"></div>
<div class="m" style="left:1037px;top:183px;width:62px;height:18px;line-height:19px;background:#d3d3d3;box-shadow:inset 1px 1px 0 #dcdcdc;text-align:right;padding-right:2px;overflow:hidden">0.2</div>
<div class="m" style="left:1100px;top:183px;width:111px;height:18px;line-height:19px;background:#c0c0c0;box-shadow:inset 1px 1px 0 #dcdcdc;padding-left:2px;overflow:hidden">aller_verin</div>
<div class="m" style="left:1212px;top:183px;width:118px;height:18px;line-height:19px;background:#c0c0c0;box-shadow:inset 1px 1px 0 #dcdcdc;padding-left:2px;overflow:hidden">BOOL</div>
<div class="m" style="left:1331px;top:183px;width:111px;height:18px;line-height:19px;background:#c0c0c0;box-shadow:inset 1px 1px 0 #dcdcdc;padding-left:2px;overflow:hidden">FALSE</div>
<div class="m" style="left:1443px;top:183px;width:111px;height:18px;line-height:19px;background:#fff;padding-left:2px;overflow:hidden">FALSE</div>
<div class="m" style="left:1555px;top:183px;width:92px;height:18px;line-height:19px;background:#c0c0c0;box-shadow:inset 1px 1px 0 #dcdcdc;padding-left:2px;overflow:hidden"></div>
<div class="m" style="left:1037px;top:202px;width:62px;height:18px;line-height:19px;background:#d3d3d3;box-shadow:inset 1px 1px 0 #dcdcdc;text-align:right;padding-right:2px;overflow:hidden">0.3</div>
<div class="m" style="left:1100px;top:202px;width:111px;height:18px;line-height:19px;background:#c0c0c0;box-shadow:inset 1px 1px 0 #dcdcdc;padding-left:2px;overflow:hidden">retour_verin</div>
<div class="m" style="left:1212px;top:202px;width:118px;height:18px;line-height:19px;background:#c0c0c0;box-shadow:inset 1px 1px 0 #dcdcdc;padding-left:2px;overflow:hidden">BOOL</div>
<div class="m" style="left:1331px;top:202px;width:111px;height:18px;line-height:19px;background:#c0c0c0;box-shadow:inset 1px 1px 0 #dcdcdc;padding-left:2px;overflow:hidden">FALSE</div>
<div class="m" style="left:1443px;top:202px;width:111px;height:18px;line-height:19px;background:#fff;padding-left:2px;overflow:hidden">TRUE</div>
<div class="m" style="left:1555px;top:202px;width:92px;height:18px;line-height:19px;background:#c0c0c0;box-shadow:inset 1px 1px 0 #dcdcdc;padding-left:2px;overflow:hidden"></div>
<div class="m" style="left:1037px;top:221px;width:62px;height:18px;line-height:19px;background:#d3d3d3;box-shadow:inset 1px 1px 0 #dcdcdc;text-align:right;padding-right:2px;overflow:hidden">0.4</div>
<div class="m" style="left:1100px;top:221px;width:111px;height:18px;line-height:19px;background:#c0c0c0;box-shadow:inset 1px 1px 0 #dcdcdc;padding-left:2px;overflow:hidden">F_P_Verin</div>
<div class="m" style="left:1212px;top:221px;width:118px;height:18px;line-height:19px;background:#c0c0c0;box-shadow:inset 1px 1px 0 #dcdcdc;padding-left:2px;overflow:hidden">BOOL</div>
<div class="m" style="left:1331px;top:221px;width:111px;height:18px;line-height:19px;background:#c0c0c0;box-shadow:inset 1px 1px 0 #dcdcdc;padding-left:2px;overflow:hidden">FALSE</div>
<div class="m" style="left:1443px;top:221px;width:111px;height:18px;line-height:19px;background:#fff;padding-left:2px;overflow:hidden">FALSE</div>
<div class="m" style="left:1555px;top:221px;width:92px;height:18px;line-height:19px;background:#c0c0c0;box-shadow:inset 1px 1px 0 #dcdcdc;padding-left:2px;overflow:hidden"></div>
<div class="m" style="left:1037px;top:240px;width:62px;height:18px;line-height:19px;background:#d3d3d3;box-shadow:inset 1px 1px 0 #dcdcdc;text-align:right;padding-right:2px;overflow:hidden">0.5</div>
<div class="m" style="left:1100px;top:240px;width:111px;height:18px;line-height:19px;background:#c0c0c0;box-shadow:inset 1px 1px 0 #dcdcdc;padding-left:2px;overflow:hidden">F_N_Verin</div>
<div class="m" style="left:1212px;top:240px;width:118px;height:18px;line-height:19px;background:#c0c0c0;box-shadow:inset 1px 1px 0 #dcdcdc;padding-left:2px;overflow:hidden">BOOL</div>
<div class="m" style="left:1331px;top:240px;width:111px;height:18px;line-height:19px;background:#c0c0c0;box-shadow:inset 1px 1px 0 #dcdcdc;padding-left:2px;overflow:hidden">FALSE</div>
<div class="m" style="left:1443px;top:240px;width:111px;height:18px;line-height:19px;background:#fff;padding-left:2px;overflow:hidden">FALSE</div>
<div class="m" style="left:1555px;top:240px;width:92px;height:18px;line-height:19px;background:#c0c0c0;box-shadow:inset 1px 1px 0 #dcdcdc;padding-left:2px;overflow:hidden"></div>

<!-- ===== FC37 window (active) ===== -->
<div class="win" id="fc37" style="left:211px;top:67px;width:801px;height:963px"></div>
<div class="a" style="left:215px;top:71px;width:793px;height:18px;background:linear-gradient(90deg,#0a246a 0%,#a6caf0 100%)"></div>
<svg class="ce" style="left:218px;top:76px" width="15" height="10" viewBox="0 0 15 10"><rect x="2.5" y=".5" width="10" height="9" fill="#c0c0c0" stroke="#000080" stroke-width="1.4"/><path d="M3.5 8.5v-7h8" stroke="#fff" fill="none"/><path d="M0 3h2M0 6h2M13 5h2" stroke="#000080" stroke-width="2"/></svg>
<div class="a" style="left:235px;top:73px;width:593px;height:13px;background:#0ff;border-radius:4px"></div>
<div class="t" style="transform:scaleX(1.0800);transform-origin:0 0;left:240px;top:73px;font-weight:bold">@FC37 -- "Couteau TS" -- API_CH22_meincke_new\SIMATIC 300 Station\CPU 315-2 DP\...\FC37  ONLINE</div>
<div class="btn" style="left:956px;top:73px;width:16px;height:14px"><div class="a" style="left:4px;top:9px;width:6px;height:2px;background:#000"></div></div>
<div class="btn" style="left:972px;top:73px;width:16px;height:14px"><div class="a" style="left:3px;top:2px;width:9px;height:9px;border:1px solid #000;border-top-width:2px"></div></div>
<div class="btn" style="left:990px;top:73px;width:16px;height:14px"><svg style="left:4px;top:3px" width="8" height="7" viewBox="0 0 8 7"><path d="M.5 0l7 7M7.5 0l-7 7" stroke="#000" stroke-width="1.6" fill="none"/></svg></div>
<div class="a" style="left:215px;top:90px;width:793px;height:1px;background:#808080"></div>
<div class="a" style="left:215px;top:91px;width:792px;height:1px;background:#000"></div>
<div class="a" style="left:216px;top:92px;width:792px;height:1px;background:#fff"></div>
<div class="a" style="left:215px;top:97px;width:792px;height:1px;background:#808080"></div>
<div class="a" style="left:216px;top:98px;width:790px;height:1px;background:#000"></div>
<div class="a" style="left:215px;top:92px;width:1px;height:933px;background:#808080"></div>
<div class="a" style="left:216px;top:98px;width:1px;height:926px;background:#000"></div>
<div class="a" style="left:1007px;top:90px;width:1px;height:936px;background:#fff"></div>
<div class="a" style="left:215px;top:1025px;width:793px;height:1px;background:#fff"></div>
<div class="a" id="lad" style="left:217px;top:99px;width:773px;height:909px;background:#fff;overflow:hidden"><div class="a" style="left:-217px;top:-99px;width:1920px;height:1060px">
<svg class="ce" style="left:0;top:0" width="1920" height="1060" viewBox="0 0 1920 1060">
<rect x="233" y="113" width="1" height="267" fill="#000"/>
<rect x="232" y="183" width="38" height="1" fill="#000"/>
<rect x="270" y="176" width="1" height="14" fill="#000"/>
<rect x="282" y="176" width="1" height="14" fill="#000"/>
<rect x="283" y="183" width="74" height="1" fill="#000"/>
<rect x="357" y="176" width="1" height="14" fill="#000"/>
<rect x="369" y="176" width="1" height="14" fill="#000"/>
<path d="M359.5 189.5L367.5 178.5" stroke="#000" stroke-width="1" fill="none" shape-rendering="auto"/>
<rect x="370" y="183" width="44" height="1" fill="#000"/>
<rect x="414.5" y="162.5" width="73" height="84" fill="none" stroke="#000"/>
<rect x="488" y="183" width="187" height="1" fill="#000"/>
<rect x="581" y="183" width="1" height="169" fill="#000"/>
<rect x="675.5" y="162.5" width="73" height="84" fill="none" stroke="#000"/>
<rect x="749" y="183" width="95" height="1" fill="#000"/>
<rect x="406" y="211" width="8" height="1" fill="#000"/>
<rect x="406" y="239" width="8" height="1" fill="#000"/>
<rect x="488" y="211" width="8" height="1" fill="#000"/>
<rect x="488" y="239" width="8" height="1" fill="#000"/>
<rect x="667" y="211" width="8" height="1" fill="#000"/>
<rect x="667" y="239" width="8" height="1" fill="#000"/>
<rect x="749" y="211" width="8" height="1" fill="#000"/>
<rect x="749" y="239" width="8" height="1" fill="#000"/>
<rect x="580" y="351" width="28" height="1" fill="#000"/>
<rect x="608" y="344" width="1" height="14" fill="#000"/>
<rect x="640" y="344" width="1" height="14" fill="#000"/>
<rect x="641" y="351" width="64" height="1" fill="#000"/>
<rect x="707" y="344" width="1" height="1" fill="#000"/>
<rect x="706" y="345" width="1" height="1" fill="#000"/>
<rect x="706" y="346" width="1" height="1" fill="#000"/>
<rect x="706" y="347" width="1" height="1" fill="#000"/>
<rect x="705" y="348" width="1" height="1" fill="#000"/>
<rect x="705" y="349" width="1" height="1" fill="#000"/>
<rect x="705" y="350" width="1" height="1" fill="#000"/>
<rect x="705" y="351" width="1" height="1" fill="#000"/>
<rect x="705" y="352" width="1" height="1" fill="#000"/>
<rect x="705" y="353" width="1" height="1" fill="#000"/>
<rect x="706" y="354" width="1" height="1" fill="#000"/>
<rect x="706" y="355" width="1" height="1" fill="#000"/>
<rect x="706" y="356" width="1" height="1" fill="#000"/>
<rect x="714" y="344" width="1" height="1" fill="#000"/>
<rect x="715" y="345" width="1" height="1" fill="#000"/>
<rect x="715" y="346" width="1" height="1" fill="#000"/>
<rect x="715" y="347" width="1" height="1" fill="#000"/>
<rect x="716" y="348" width="1" height="1" fill="#000"/>
<rect x="716" y="349" width="1" height="1" fill="#000"/>
<rect x="716" y="350" width="1" height="1" fill="#000"/>
<rect x="716" y="351" width="1" height="1" fill="#000"/>
<rect x="716" y="352" width="1" height="1" fill="#000"/>
<rect x="716" y="353" width="1" height="1" fill="#000"/>
<rect x="715" y="354" width="1" height="1" fill="#000"/>
<rect x="715" y="355" width="1" height="1" fill="#000"/>
<rect x="715" y="356" width="1" height="1" fill="#000"/>
<rect x="713" y="357" width="2" height="1" fill="#000"/>
<rect x="717" y="351" width="31" height="1" fill="#000"/>
<rect x="748" y="344" width="1" height="14" fill="#000"/>
<rect x="232.5" y="414.5" width="550" height="533" fill="none" stroke="#000"/>
<rect x="233" y="428" width="1" height="520" fill="#000"/>
<rect x="233" y="540" width="37" height="1" fill="#000"/>
<rect x="270" y="533" width="1" height="14" fill="#000"/>
<rect x="282" y="533" width="1" height="14" fill="#000"/>
<rect x="283" y="540" width="74" height="1" fill="#000"/>
<rect x="357" y="533" width="1" height="14" fill="#000"/>
<rect x="369" y="533" width="1" height="14" fill="#000"/>
<rect x="370" y="540" width="71" height="1" fill="#000"/>
<rect x="443" y="533" width="1" height="1" fill="#000"/>
<rect x="442" y="534" width="1" height="1" fill="#000"/>
<rect x="442" y="535" width="1" height="1" fill="#000"/>
<rect x="442" y="536" width="1" height="1" fill="#000"/>
<rect x="441" y="537" width="1" height="1" fill="#000"/>
<rect x="441" y="538" width="1" height="1" fill="#000"/>
<rect x="441" y="539" width="1" height="1" fill="#000"/>
<rect x="441" y="540" width="1" height="1" fill="#000"/>
<rect x="441" y="541" width="1" height="1" fill="#000"/>
<rect x="441" y="542" width="1" height="1" fill="#000"/>
<rect x="442" y="543" width="1" height="1" fill="#000"/>
<rect x="442" y="544" width="1" height="1" fill="#000"/>
<rect x="442" y="545" width="1" height="1" fill="#000"/>
<rect x="456" y="533" width="1" height="1" fill="#000"/>
<rect x="457" y="534" width="1" height="1" fill="#000"/>
<rect x="457" y="535" width="1" height="1" fill="#000"/>
<rect x="457" y="536" width="1" height="1" fill="#000"/>
<rect x="458" y="537" width="1" height="1" fill="#000"/>
<rect x="458" y="538" width="1" height="1" fill="#000"/>
<rect x="458" y="539" width="1" height="1" fill="#000"/>
<rect x="458" y="540" width="1" height="1" fill="#000"/>
<rect x="458" y="541" width="1" height="1" fill="#000"/>
<rect x="458" y="542" width="1" height="1" fill="#000"/>
<rect x="457" y="543" width="1" height="1" fill="#000"/>
<rect x="457" y="544" width="1" height="1" fill="#000"/>
<rect x="457" y="545" width="1" height="1" fill="#000"/>
<rect x="455" y="546" width="2" height="1" fill="#000"/>
<rect x="459" y="540" width="72" height="1" fill="#000"/>
<rect x="494" y="540" width="1" height="253" fill="#000"/>
<rect x="531" y="533" width="1" height="14" fill="#000"/>
<rect x="543" y="533" width="1" height="14" fill="#000"/>
<path d="M533.5 546.5L541.5 535.5" stroke="#000" stroke-width="1" fill="none" shape-rendering="auto"/>
<rect x="544" y="540" width="17" height="1" fill="#000"/>
<rect x="561" y="538" width="19" height="6" fill="#008080"/>
<rect x="581" y="540" width="1" height="127" fill="#000"/>
<rect x="581" y="540" width="3" height="1" fill="#00f"/>
<rect x="587" y="540" width="3" height="1" fill="#00f"/>
<rect x="593" y="540" width="3" height="1" fill="#00f"/>
<rect x="599" y="540" width="3" height="1" fill="#00f"/>
<rect x="605" y="540" width="3" height="1" fill="#00f"/>
<rect x="611" y="540" width="3" height="1" fill="#00f"/>
<rect x="633" y="540" width="3" height="1" fill="#00f"/>
<rect x="639" y="540" width="3" height="1" fill="#00f"/>
<rect x="645" y="540" width="3" height="1" fill="#00f"/>
<rect x="651" y="540" width="3" height="1" fill="#00f"/>
<rect x="657" y="540" width="3" height="1" fill="#00f"/>
<rect x="663" y="540" width="3" height="1" fill="#00f"/>
<rect x="581" y="540" width="1" height="1" fill="#000"/>
<rect x="617" y="533" width="1" height="1" fill="#00f"/>
<rect x="616" y="534" width="1" height="1" fill="#00f"/>
<rect x="616" y="535" width="1" height="1" fill="#00f"/>
<rect x="615" y="539" width="1" height="1" fill="#00f"/>
<rect x="615" y="540" width="1" height="1" fill="#00f"/>
<rect x="615" y="541" width="1" height="1" fill="#00f"/>
<rect x="616" y="545" width="1" height="1" fill="#00f"/>
<rect x="630" y="533" width="1" height="1" fill="#00f"/>
<rect x="631" y="534" width="1" height="1" fill="#00f"/>
<rect x="631" y="535" width="1" height="1" fill="#00f"/>
<rect x="632" y="539" width="1" height="1" fill="#00f"/>
<rect x="632" y="540" width="1" height="1" fill="#00f"/>
<rect x="632" y="541" width="1" height="1" fill="#00f"/>
<rect x="631" y="545" width="1" height="1" fill="#00f"/>
<rect x="629" y="546" width="2" height="1" fill="#00f"/>
<rect x="581" y="666" width="3" height="1" fill="#00f"/>
<rect x="587" y="666" width="3" height="1" fill="#00f"/>
<rect x="593" y="666" width="3" height="1" fill="#00f"/>
<rect x="599" y="666" width="3" height="1" fill="#00f"/>
<rect x="605" y="666" width="3" height="1" fill="#00f"/>
<rect x="611" y="666" width="3" height="1" fill="#00f"/>
<rect x="633" y="666" width="3" height="1" fill="#00f"/>
<rect x="639" y="666" width="3" height="1" fill="#00f"/>
<rect x="645" y="666" width="3" height="1" fill="#00f"/>
<rect x="651" y="666" width="3" height="1" fill="#00f"/>
<rect x="657" y="666" width="3" height="1" fill="#00f"/>
<rect x="663" y="666" width="3" height="1" fill="#00f"/>
<rect x="580" y="666" width="2" height="1" fill="#000"/>
<rect x="617" y="659" width="3" height="1" fill="#0f0"/>
<rect x="616" y="660" width="2" height="3" fill="#0f0"/>
<rect x="615" y="663" width="2" height="7" fill="#0f0"/>
<rect x="616" y="670" width="2" height="2" fill="#0f0"/>
<rect x="617" y="672" width="3" height="1" fill="#0f0"/>
<rect x="629" y="659" width="3" height="1" fill="#0f0"/>
<rect x="631" y="660" width="2" height="3" fill="#0f0"/>
<rect x="632" y="663" width="2" height="7" fill="#0f0"/>
<rect x="631" y="670" width="2" height="2" fill="#0f0"/>
<rect x="629" y="672" width="3" height="1" fill="#0f0"/>
<rect x="493" y="792" width="38" height="1" fill="#000"/>
<rect x="531" y="785" width="1" height="3" fill="#00f"/>
<rect x="531" y="791" width="1" height="3" fill="#00f"/>
<rect x="531" y="797" width="1" height="2" fill="#00f"/>
<rect x="543" y="785" width="1" height="3" fill="#00f"/>
<rect x="543" y="791" width="1" height="3" fill="#00f"/>
<rect x="543" y="797" width="1" height="2" fill="#00f"/>
<rect x="543" y="792" width="3" height="1" fill="#00f"/>
<rect x="549" y="792" width="3" height="1" fill="#00f"/>
<rect x="555" y="792" width="3" height="1" fill="#00f"/>
<rect x="561" y="792" width="3" height="1" fill="#00f"/>
<rect x="567" y="792" width="3" height="1" fill="#00f"/>
<rect x="573" y="792" width="3" height="1" fill="#00f"/>
<rect x="579" y="792" width="2" height="1" fill="#00f"/>
<rect x="581" y="792" width="3" height="1" fill="#00f"/>
<rect x="587" y="792" width="3" height="1" fill="#00f"/>
<rect x="593" y="792" width="3" height="1" fill="#00f"/>
<rect x="599" y="792" width="3" height="1" fill="#00f"/>
<rect x="605" y="792" width="3" height="1" fill="#00f"/>
<rect x="611" y="792" width="3" height="1" fill="#00f"/>
<rect x="633" y="792" width="3" height="1" fill="#00f"/>
<rect x="639" y="792" width="3" height="1" fill="#00f"/>
<rect x="645" y="792" width="3" height="1" fill="#00f"/>
<rect x="651" y="792" width="3" height="1" fill="#00f"/>
<rect x="657" y="792" width="3" height="1" fill="#00f"/>
<rect x="663" y="792" width="3" height="1" fill="#00f"/>
<rect x="617" y="785" width="1" height="1" fill="#00f"/>
<rect x="616" y="786" width="1" height="1" fill="#00f"/>
<rect x="616" y="787" width="1" height="1" fill="#00f"/>
<rect x="615" y="791" width="1" height="1" fill="#00f"/>
<rect x="615" y="792" width="1" height="1" fill="#00f"/>
<rect x="615" y="793" width="1" height="1" fill="#00f"/>
<rect x="616" y="797" width="1" height="1" fill="#00f"/>
<rect x="630" y="785" width="1" height="1" fill="#00f"/>
<rect x="631" y="786" width="1" height="1" fill="#00f"/>
<rect x="631" y="787" width="1" height="1" fill="#00f"/>
<rect x="632" y="791" width="1" height="1" fill="#00f"/>
<rect x="632" y="792" width="1" height="1" fill="#00f"/>
<rect x="632" y="793" width="1" height="1" fill="#00f"/>
<rect x="631" y="797" width="1" height="1" fill="#00f"/>
<rect x="629" y="798" width="2" height="1" fill="#00f"/>
<rect x="581" y="792" width="1" height="127" fill="#000"/>
<rect x="581" y="918" width="3" height="1" fill="#00f"/>
<rect x="587" y="918" width="3" height="1" fill="#00f"/>
<rect x="593" y="918" width="3" height="1" fill="#00f"/>
<rect x="599" y="918" width="3" height="1" fill="#00f"/>
<rect x="605" y="918" width="3" height="1" fill="#00f"/>
<rect x="611" y="918" width="3" height="1" fill="#00f"/>
<rect x="633" y="918" width="3" height="1" fill="#00f"/>
<rect x="639" y="918" width="3" height="1" fill="#00f"/>
<rect x="645" y="918" width="3" height="1" fill="#00f"/>
<rect x="651" y="918" width="3" height="1" fill="#00f"/>
<rect x="657" y="918" width="3" height="1" fill="#00f"/>
<rect x="663" y="918" width="3" height="1" fill="#00f"/>
<rect x="580" y="918" width="2" height="1" fill="#000"/>
<rect x="617" y="911" width="3" height="1" fill="#0f0"/>
<rect x="616" y="912" width="2" height="3" fill="#0f0"/>
<rect x="615" y="915" width="2" height="7" fill="#0f0"/>
<rect x="616" y="922" width="2" height="2" fill="#0f0"/>
<rect x="617" y="924" width="3" height="1" fill="#0f0"/>
<rect x="629" y="911" width="3" height="1" fill="#0f0"/>
<rect x="631" y="912" width="2" height="3" fill="#0f0"/>
<rect x="632" y="915" width="2" height="7" fill="#0f0"/>
<rect x="631" y="922" width="2" height="2" fill="#0f0"/>
<rect x="629" y="924" width="3" height="1" fill="#0f0"/>
<rect x="233.5" y="396.5" width="8" height="8" fill="#fff" stroke="#000"/>
<rect x="235" y="400" width="5" height="1" fill="#000"/>
<rect x="233.5" y="963.5" width="8" height="8" fill="#fff" stroke="#000"/>
<rect x="235" y="967" width="5" height="1" fill="#000"/>
<rect x="233" y="995" width="1" height="15" fill="#000"/>
</svg>
<div class="m " style="left:417px;top:177px">S</div>
<div class="m " style="left:474px;top:177px">Q</div>
<div class="m " style="left:417px;top:205px">TW</div>
<div class="m " style="left:453px;top:205px">DUAL</div>
<div class="m " style="left:417px;top:233px">R</div>
<div class="m " style="left:460px;top:233px">DEZ</div>
<div class="m " style="left:497px;top:205px">...</div>
<div class="m " style="left:497px;top:233px">...</div>
<div class="m " style="left:382px;top:233px">...</div>
<div class="t c" style="left:414px;top:162px;width:75px;font-size:9.5px">S_AVERZ</div>
<div class="m " style="left:678px;top:177px">S</div>
<div class="m " style="left:735px;top:177px">Q</div>
<div class="m " style="left:678px;top:205px">TW</div>
<div class="m " style="left:714px;top:205px">DUAL</div>
<div class="m " style="left:678px;top:233px">R</div>
<div class="m " style="left:721px;top:233px">DEZ</div>
<div class="m " style="left:758px;top:205px">...</div>
<div class="m " style="left:758px;top:233px">...</div>
<div class="m " style="left:643px;top:233px">...</div>
<div class="t c" style="left:675px;top:162px;width:75px;font-size:9.5px">S_AVERZ</div>
<div class="m " style="left:354px;top:205px">S5T#25S</div>
<div class="m " style="left:622px;top:205px">S5T#1S</div>
<div class="m " style="left:443px;top:146px">T24</div>
<div class="m " style="left:704px;top:146px">T25</div>
<div class="m " style="left:356px;top:160px">T25</div>
<div class="m mb" style="left:261px;top:118px">E31.4</div>
<div class="m " style="left:244px;top:132px">"reserve_</div>
<div class="m " style="left:255px;top:146px">Ilot3_</div>
<div class="m " style="left:248px;top:160px">entreel"</div>
<div class="m " style="left:614px;top:345px">NOT</div>
<div class="m mb" style="left:678px;top:258px">DB37.DBX0.</div>
<div class="m mb" style="left:710px;top:272px">1</div>
<div class="m " style="left:697px;top:286px">"DB </div>
<div class="m " style="left:683px;top:300px">Couteau </div>
<div class="m " style="left:697px;top:314px">TS".</div>
<div class="m " style="left:683px;top:328px">mem_puls</div>
<div class="m " style="left:447px;top:534px">P</div>
<div class="m " style="left:621px;top:534px">S</div>
<div class="m mb" style="left:261px;top:475px">E31.4</div>
<div class="m " style="left:244px;top:489px">"reserve_</div>
<div class="m " style="left:255px;top:503px">Ilot3_</div>
<div class="m " style="left:248px;top:517px">entreel"</div>
<div class="m mb" style="left:330px;top:447px">DB37.DBX0.</div>
<div class="m mb" style="left:362px;top:461px">1</div>
<div class="m " style="left:349px;top:475px">"DB </div>
<div class="m " style="left:335px;top:489px">Couteau </div>
<div class="m " style="left:349px;top:503px">TS".</div>
<div class="m " style="left:335px;top:517px">mem_puls</div>
<div class="m mb" style="left:417px;top:447px">DB37.DBX0.</div>
<div class="m mb" style="left:449px;top:461px">4</div>
<div class="m " style="left:436px;top:475px">"DB </div>
<div class="m " style="left:422px;top:489px">Couteau </div>
<div class="m " style="left:436px;top:503px">TS".</div>
<div class="m " style="left:418px;top:517px">F_P_Verin</div>
<div class="m mb" style="left:504px;top:433px">DB37.DBX0.</div>
<div class="m mb" style="left:536px;top:447px">2</div>
<div class="m " style="left:523px;top:461px">"DB </div>
<div class="m " style="left:509px;top:475px">Couteau </div>
<div class="m " style="left:523px;top:489px">TS".</div>
<div class="m " style="left:516px;top:503px">aller_</div>
<div class="m " style="left:519px;top:517px">verin</div>
<div class="m mb" style="left:591px;top:433px">DB37.DBX0.</div>
<div class="m mb" style="left:623px;top:447px">2</div>
<div class="m " style="left:610px;top:461px">"DB </div>
<div class="m " style="left:596px;top:475px">Couteau </div>
<div class="m " style="left:610px;top:489px">TS".</div>
<div class="m " style="left:603px;top:503px">aller_</div>
<div class="m " style="left:606px;top:517px">verin</div>
<div class="m " style="left:621px;top:660px">R</div>
<div class="m mb" style="left:591px;top:559px">DB37.DBX0.</div>
<div class="m mb" style="left:623px;top:573px">3</div>
<div class="m " style="left:610px;top:587px">"DB </div>
<div class="m " style="left:596px;top:601px">Couteau </div>
<div class="m " style="left:610px;top:615px">TS".</div>
<div class="m " style="left:599px;top:629px">retour_</div>
<div class="m " style="left:606px;top:643px">verin</div>
<div class="m " style="left:621px;top:786px">R</div>
<div class="m mb" style="left:504px;top:685px">DB37.DBX0.</div>
<div class="m mb" style="left:536px;top:699px">2</div>
<div class="m " style="left:523px;top:713px">"DB </div>
<div class="m " style="left:509px;top:727px">Couteau </div>
<div class="m " style="left:523px;top:741px">TS".</div>
<div class="m " style="left:516px;top:755px">aller_</div>
<div class="m " style="left:519px;top:769px">verin</div>
<div class="m mb" style="left:591px;top:685px">DB37.DBX0.</div>
<div class="m mb" style="left:623px;top:699px">2</div>
<div class="m " style="left:610px;top:713px">"DB </div>
<div class="m " style="left:596px;top:727px">Couteau </div>
<div class="m " style="left:610px;top:741px">TS".</div>
<div class="m " style="left:603px;top:755px">aller_</div>
<div class="m " style="left:606px;top:769px">verin</div>
<div class="m " style="left:621px;top:912px">S</div>
<div class="m mb" style="left:591px;top:811px">DB37.DBX0.</div>
<div class="m mb" style="left:623px;top:825px">3</div>
<div class="m " style="left:610px;top:839px">"DB </div>
<div class="m " style="left:596px;top:853px">Couteau </div>
<div class="m " style="left:610px;top:867px">TS".</div>
<div class="m " style="left:599px;top:881px">retour_</div>
<div class="m " style="left:606px;top:895px">verin</div>
<div class="a" style="left:247px;top:392px;width:67px;height:18px;background:#008080;outline:1px dotted #fff;outline-offset:-1px"></div>
<div class="m bb" style="left:249px;top:395px;color:#fff">Réseau  2</div>
<div class="m " style="left:315px;top:395px">:</div>
<div class="m " style="left:326px;top:395px">permutation</div>
<div class="m bb" style="left:249px;top:962px">Réseau  3</div>
<div class="m " style="left:315px;top:962px">:</div>
<div class="m " style="left:326px;top:962px">sortie</div>
<div class="m mb" style="left:244px;top:1000px">DB37.DBX0.</div>
</div></div>
<div class="a dith" style="left:990px;top:99px;width:16px;height:909px"></div>
<div class="sbtn" style="left:990px;top:99px;width:16px;height:16px"><svg class="ce" style="left:4px;top:6px" width="7" height="4" viewBox="0 0 7 4"><path d="M3 0h1v1h-1zM2 1h3v1h-3zM1 2h5v1h-5zM0 3h7v1h-7z" fill="#000"/></svg></div>
<div class="sbtn" style="left:990px;top:180px;width:16px;height:15px"></div>
<div class="sbtn" style="left:990px;top:992px;width:16px;height:16px"><svg class="ce" style="left:4px;top:6px" width="7" height="4" viewBox="0 0 7 4"><path d="M0 0h7v1h-7zM1 1h5v1h-5zM2 2h3v1h-3zM3 3h1v1h-1z" fill="#000"/></svg></div>
<div class="a dith" style="left:217px;top:1008px;width:773px;height:16px"></div>
<div class="sbtn" style="left:217px;top:1008px;width:16px;height:16px"><svg class="ce" style="left:5px;top:4px" width="4" height="7" viewBox="0 0 4 7"><path d="M3 0h1v7h-1zM2 1h1v5h-1zM1 2h1v3h-1zM0 3h1v1h-1z" fill="#000"/></svg></div>
<div class="sbtn" style="left:233px;top:1008px;width:16px;height:16px"></div>
<div class="sbtn" style="left:974px;top:1008px;width:16px;height:16px"><svg class="ce" style="left:5px;top:4px" width="4" height="7" viewBox="0 0 4 7"><path d="M0 0h1v7h-1zM1 1h1v5h-1zM2 2h1v3h-1zM3 3h1v1h-1z" fill="#000"/></svg></div>
<div class="a face" style="left:990px;top:1008px;width:16px;height:16px"></div>
<svg class="ce" style="left:993px;top:1011px" width="13" height="13" viewBox="0 0 13 13"><path d="M13 1.5L1.5 13M13 5.5L5.5 13M13 9.5L9.5 13" stroke="#808080" shape-rendering="auto"/><path d="M12 .5L.5 12M12 4.5L4.5 12M12 8.5L8.5 12" stroke="#fff" shape-rendering="auto"/></svg>

</div>

<div class="a" style="left:0;top:0;width:1714px;height:970px;box-shadow:inset 1px 1px 0 #808080,inset 2px 2px 0 #404040,inset -1px -1px 0 #fff,inset -2px -2px 0 #d4d0c8;pointer-events:none"></div>
</div>
<!-- ===== left dock panel: program elements ===== -->
<div class="a face" style="left:0;top:64px;width:206px;height:966px"></div>
<div class="a" style="left:202px;top:64px;width:1px;height:966px;background:#fff"></div>
<div class="a" style="left:0;top:1030px;width:206px;height:1px;background:#808080"></div>
<div class="a" style="left:5px;top:68px;width:164px;height:3px;border-top:1px solid #fff;border-left:1px solid #fff;border-bottom:1px solid #808080;border-right:1px solid #808080"></div>
<div class="a" style="left:5px;top:72px;width:164px;height:3px;border-top:1px solid #fff;border-left:1px solid #fff;border-bottom:1px solid #808080;border-right:1px solid #808080"></div>
<div class="a" style="left:170px;top:66px;width:12px;height:11px;box-shadow:inset 1px 1px 0 #fff,inset -1px -1px 0 #808080"><svg class="ce" style="left:3px;top:3px" width="5" height="3" viewBox="0 0 5 3"><path d="M0 0h5L2.5 3z" fill="#808080"/></svg></div>
<div class="a" style="left:184px;top:66px;width:11px;height:11px;box-shadow:inset 1px 1px 0 #fff,inset -1px -1px 0 #808080"><svg style="left:2px;top:3px" width="7" height="6" viewBox="0 0 7 6"><path d="M.5 .5l6 5M6.5 .5l-6 5" stroke="#000" stroke-width="1.7" fill="none"/></svg></div>
<div class="a" style="left:5px;top:79px;width:189px;height:926px;border-left:1px solid #fff;border-top:1px solid #fff;border-right:1px solid #000;border-bottom:1px solid #000"></div>
<div class="a" style="left:7px;top:81px;width:186px;height:922px;border-left:1px solid #808080;border-top:1px solid #808080;border-right:1px solid #808080;border-bottom:1px solid #d4d0c8;box-shadow:inset -1px -1px 0 #fff,inset -2px -2px 0 #fff"></div>
<div class="a" style="left:8px;top:82px;width:181px;height:918px;border:1px solid #000;background:#d4d0c8"></div>
<div class="a" style="left:9px;top:84px;width:178px;height:4px;border-top:1px solid #fff;border-left:1px solid #fff;border-bottom:1px solid #808080;border-right:1px solid #808080"></div>
<div class="a" style="left:9px;top:103px;width:179px;height:851px;background:#fff;border-left:1px solid #808080;border-top:1px solid #808080;border-right:1px solid #d4d0c8;border-bottom:1px solid #d4d0c8;box-shadow:inset 1px 1px 0 #404040"></div>
<div class="a" style="left:9px;top:954px;width:179px;height:1px;background:#fff"></div>
<div class="a" style="left:10px;top:957px;width:155px;height:41px;border-left:1px solid #808080;border-top:1px solid #808080;border-right:1px solid #fff;border-bottom:1px solid #fff;box-shadow:inset 1px 1px 0 #404040"></div>
<div class="t" style="transform:scaleX(1.0212);transform-origin:0 0;left:11px;top:960px;line-height:13px;height:26px">Détecter un front montant du<br>RLG</div>
<div class="btn" style="left:166px;top:956px;width:22px;height:21px"><svg style="left:3px;top:3px" width="18" height="15" viewBox="0 0 18 15"><path d="M0 .5h8" stroke="#000" fill="none"/><path d="M.5 4.500L4 1l3.500 3.500z" fill="#000"/><path d="M4 4v4.500h5" stroke="#000" stroke-width="1.800" fill="none"/><path d="M15.500 6.500l-3 3l3 3" stroke="#000" stroke-width="1.200" fill="none"/><path d="M12 14.500h5" stroke="#000" fill="none"/></svg></div>
<div class="a" style="left:19px;top:113px;width:1px;height:545px;background:repeating-linear-gradient(180deg,#808080 0 1px,transparent 1px 2px)"></div>
<div class="a" style="left:38px;top:137px;width:1px;height:217px;background:repeating-linear-gradient(180deg,#808080 0 1px,transparent 1px 2px)"></div>
<div class="a" style="left:38px;top:665px;width:1px;height:105px;background:repeating-linear-gradient(180deg,#808080 0 1px,transparent 1px 2px)"></div>
<div class="a" style="left:19px;top:113px;width:11px;height:1px;background:repeating-linear-gradient(90deg,#808080 0 1px,transparent 1px 2px)"></div>
<svg class="ce" style="left:31px;top:106px" width="15" height="14" viewBox="0 0 15 14"><rect x="0" y="0" width="15" height="14" fill="#c0c0c0"/><path d="M1.5 0v6M4.5 0v6M1.500 3.500h3M6.500 0v6M6.500 3.500l2.500-3M6.500 3.500l2.500 2.500M11.5 .5l-1.500 2.500l1.500 3M13 .5l1.500 2.500l-1.500 3" stroke="#000" stroke-width="1" fill="none"/><path d="M0 8h2v6h-2zM2 10h4v2h-4zM8 10h2v2h-2zM12 10h2v2h-2z" fill="#000"/></svg>
<div class="t" style="transform:scaleX(0.9921);transform-origin:0 0;left:50px;top:106px">Nouveau réseau</div>
<div class="a" style="left:19px;top:129px;width:11px;height:1px;background:repeating-linear-gradient(90deg,#808080 0 1px,transparent 1px 2px)"></div>
<div class="a" style="left:15px;top:125px;width:9px;height:9px;background:#fff;border:1px solid #808080"></div><svg class="ce" style="left:15px;top:125px" width="9" height="9" viewBox="0 0 9 9"><path d="M2 4.500h5" stroke="#000" stroke-width="1" fill="none"/></svg>
<svg class="ce" style="left:30px;top:123px" width="16" height="14" viewBox="0 0 16 14"><path d="M.5 12.500V2.500l2-2h4l2 2h5.500v10z" fill="#ffff7a" stroke="#808080"/><path d="M1.500 11.500V3.500l1.500-2h3l2 2h5" stroke="#fff" fill="none"/><path d="M14.500 3v10M1 12.500h14" stroke="#000" fill="none"/><g transform="translate(-1,-2)"><path d="M3 8.5h4M7.5 5v7M10.5 5v7" stroke="#000" stroke-width="1" fill="none"/></g></svg>
<div class="t" style="transform:scaleX(0.9964);transform-origin:0 0;left:50px;top:122px">Opérations sur bits</div>
<div class="a" style="left:38px;top:145px;width:12px;height:1px;background:repeating-linear-gradient(90deg,#808080 0 1px,transparent 1px 2px)"></div>
<svg class="ce" style="left:51px;top:142px" width="9" height="7" viewBox="0 0 9 7"><path d="M0 3.500h5M5.500 0v7M8.500 0v7" stroke="#000" stroke-width="1" fill="none"/></svg>
<div class="t" style="transform:scaleX(1.1743);transform-origin:0 0;left:69px;top:138px">--|  |--</div>
<div class="a" style="left:38px;top:161px;width:12px;height:1px;background:repeating-linear-gradient(90deg,#808080 0 1px,transparent 1px 2px)"></div>
<svg class="ce" style="left:51px;top:158px" width="9" height="7" viewBox="0 0 9 7"><path d="M0 3.500h5M5.500 0v7M8.500 0v7" stroke="#000" stroke-width="1" fill="none"/></svg>
<div class="t" style="transform:scaleX(1.2331);transform-origin:0 0;left:69px;top:154px">--|/|--</div>
<div class="a" style="left:38px;top:177px;width:12px;height:1px;background:repeating-linear-gradient(90deg,#808080 0 1px,transparent 1px 2px)"></div>
<svg class="ce" style="left:51px;top:174px" width="9" height="7" viewBox="0 0 9 7"><path d="M0 3.500h5M5.500 0v7M8.500 0v7" stroke="#000" stroke-width="1" fill="none"/></svg>
<div class="t" style="transform:scaleX(1.0506);transform-origin:0 0;left:69px;top:170px">--|NOT|--</div>
<div class="a" style="left:38px;top:193px;width:12px;height:1px;background:repeating-linear-gradient(90deg,#808080 0 1px,transparent 1px 2px)"></div>
<svg class="ce" style="left:51px;top:190px" width="12" height="7" viewBox="0 0 12 7"><path d="M0 3.500h3" stroke="#000" stroke-width="1" fill="none"/><path d="M5.500 .5L3 3.500L5.500 6.500M8.500 .5L11 3.500L8.500 6.500" stroke="#000" stroke-width="1" fill="none" shape-rendering="auto"/></svg>
<div class="t" style="transform:scaleX(1.1287);transform-origin:0 0;left:69px;top:186px">--( )</div>
<div class="a" style="left:38px;top:209px;width:12px;height:1px;background:repeating-linear-gradient(90deg,#808080 0 1px,transparent 1px 2px)"></div>
<svg class="ce" style="left:51px;top:206px" width="12" height="7" viewBox="0 0 12 7"><path d="M0 3.500h3" stroke="#000" stroke-width="1" fill="none"/><path d="M5.500 .5L3 3.500L5.500 6.500M8.500 .5L11 3.500L8.500 6.500" stroke="#000" stroke-width="1" fill="none" shape-rendering="auto"/></svg>
<div class="t" style="transform:scaleX(1.1633);transform-origin:0 0;left:69px;top:202px">--(#)--</div>
<div class="a" style="left:38px;top:225px;width:12px;height:1px;background:repeating-linear-gradient(90deg,#808080 0 1px,transparent 1px 2px)"></div>
<svg class="ce" style="left:51px;top:222px" width="12" height="7" viewBox="0 0 12 7"><path d="M0 3.500h3" stroke="#000" stroke-width="1" fill="none"/><path d="M5.500 .5L3 3.500L5.500 6.500M8.500 .5L11 3.500L8.500 6.500" stroke="#000" stroke-width="1" fill="none" shape-rendering="auto"/></svg>
<div class="t" style="transform:scaleX(1.0748);transform-origin:0 0;left:69px;top:218px">--(R)</div>
<div class="a" style="left:38px;top:241px;width:12px;height:1px;background:repeating-linear-gradient(90deg,#808080 0 1px,transparent 1px 2px)"></div>
<svg class="ce" style="left:51px;top:238px" width="12" height="7" viewBox="0 0 12 7"><path d="M0 3.500h3" stroke="#000" stroke-width="1" fill="none"/><path d="M5.500 .5L3 3.500L5.500 6.500M8.500 .5L11 3.500L8.500 6.500" stroke="#000" stroke-width="1" fill="none" shape-rendering="auto"/></svg>
<div class="t" style="transform:scaleX(1.0909);transform-origin:0 0;left:69px;top:234px">--(S)</div>
<div class="a" style="left:38px;top:257px;width:12px;height:1px;background:repeating-linear-gradient(90deg,#808080 0 1px,transparent 1px 2px)"></div>
<svg class="ce" style="left:50px;top:250px" width="14" height="14" viewBox="0 0 14 14"><rect x="2.500" y=".5" width="9" height="13" fill="#fff" stroke="#000"/><path d="M0 2.500h2M0 6.500h2M0 10.500h2M12 2.500h2M4 2.500h4M4 6.500h4" stroke="#000" stroke-width="1" fill="none"/></svg>
<div class="t" style="transform:scaleX(0.9227);transform-origin:0 0;left:69px;top:250px">RS</div>
<div class="a" style="left:38px;top:273px;width:12px;height:1px;background:repeating-linear-gradient(90deg,#808080 0 1px,transparent 1px 2px)"></div>
<svg class="ce" style="left:50px;top:266px" width="14" height="14" viewBox="0 0 14 14"><rect x="2.500" y=".5" width="9" height="13" fill="#fff" stroke="#000"/><path d="M0 2.500h2M0 6.500h2M0 10.500h2M12 2.500h2M4 2.500h4M4 6.500h4" stroke="#000" stroke-width="1" fill="none"/></svg>
<div class="t" style="transform:scaleX(0.8900);transform-origin:0 0;left:69px;top:266px">SR</div>
<div class="a" style="left:38px;top:289px;width:12px;height:1px;background:repeating-linear-gradient(90deg,#808080 0 1px,transparent 1px 2px)"></div>
<svg class="ce" style="left:51px;top:286px" width="12" height="7" viewBox="0 0 12 7"><path d="M0 3.500h3" stroke="#000" stroke-width="1" fill="none"/><path d="M5.500 .5L3 3.500L5.500 6.500M8.500 .5L11 3.500L8.500 6.500" stroke="#000" stroke-width="1" fill="none" shape-rendering="auto"/></svg>
<div class="t" style="transform:scaleX(1.0656);transform-origin:0 0;left:69px;top:282px">--(N)--</div>
<div class="a" style="left:38px;top:305px;width:12px;height:1px;background:repeating-linear-gradient(90deg,#808080 0 1px,transparent 1px 2px)"></div>
<svg class="ce" style="left:51px;top:302px" width="12" height="7" viewBox="0 0 12 7"><path d="M0 3.500h3" stroke="#000" stroke-width="1" fill="none"/><path d="M5.500 .5L3 3.500L5.500 6.500M8.500 .5L11 3.500L8.500 6.500" stroke="#000" stroke-width="1" fill="none" shape-rendering="auto"/></svg>
<div class="a" style="left:68px;top:297px;width:34px;height:16px;background:#d4d0c8"></div>
<div class="t" style="transform:scaleX(1.0604);transform-origin:0 0;left:69px;top:298px">--(P)--</div>
<div class="a" style="left:38px;top:321px;width:12px;height:1px;background:repeating-linear-gradient(90deg,#808080 0 1px,transparent 1px 2px)"></div>
<svg class="ce" style="left:51px;top:318px" width="12" height="7" viewBox="0 0 12 7"><path d="M0 3.500h3" stroke="#000" stroke-width="1" fill="none"/><path d="M5.500 .5L3 3.500L5.500 6.500M8.500 .5L11 3.500L8.500 6.500" stroke="#000" stroke-width="1" fill="none" shape-rendering="auto"/></svg>
<div class="t" style="transform:scaleX(0.9748);transform-origin:0 0;left:69px;top:314px">--(SAVE)</div>
<div class="a" style="left:38px;top:337px;width:12px;height:1px;background:repeating-linear-gradient(90deg,#808080 0 1px,transparent 1px 2px)"></div>
<svg class="ce" style="left:50px;top:330px" width="14" height="14" viewBox="0 0 14 14"><rect x="2.500" y=".5" width="9" height="13" fill="#fff" stroke="#000"/><path d="M0 2.500h2M0 6.500h2M0 10.500h2M12 2.500h2M4 2.500h4M4 6.500h4" stroke="#000" stroke-width="1" fill="none"/></svg>
<div class="t" style="transform:scaleX(0.8765);transform-origin:0 0;left:69px;top:330px">NEG</div>
<div class="a" style="left:38px;top:353px;width:12px;height:1px;background:repeating-linear-gradient(90deg,#808080 0 1px,transparent 1px 2px)"></div>
<svg class="ce" style="left:50px;top:346px" width="14" height="14" viewBox="0 0 14 14"><rect x="2.500" y=".5" width="9" height="13" fill="#fff" stroke="#000"/><path d="M0 2.500h2M0 6.500h2M0 10.500h2M12 2.500h2M4 2.500h4M4 6.500h4" stroke="#000" stroke-width="1" fill="none"/></svg>
<div class="t" style="transform:scaleX(0.8995);transform-origin:0 0;left:69px;top:346px">POS</div>
<div class="a" style="left:19px;top:369px;width:11px;height:1px;background:repeating-linear-gradient(90deg,#808080 0 1px,transparent 1px 2px)"></div>
<div class="a" style="left:15px;top:365px;width:9px;height:9px;background:#fff;border:1px solid #808080"></div><svg class="ce" style="left:15px;top:365px" width="9" height="9" viewBox="0 0 9 9"><path d="M2 4.500h5" stroke="#000" stroke-width="1" fill="none"/><path d="M4.500 2v5" stroke="#000" stroke-width="1" fill="none"/></svg>
<svg style="left:30px;top:363px" width="16" height="14" viewBox="0 0 16 14"><path d="M.5 12.500V2.500l2-2h4l2 2h5.500v10z" fill="#ffff7a" stroke="#808080"/><path d="M1.500 11.500V3.500l1.500-2h3l2 2h5" stroke="#fff" fill="none"/><path d="M14.500 3v10M1 12.500h14" stroke="#000" fill="none"/><g transform="translate(-1,-2)"><path d="M10.5 4.5l-5 4l5 4" stroke="#000" stroke-width="1.3" fill="none"/></g></svg>
<div class="t" style="transform:scaleX(0.9599);transform-origin:0 0;left:50px;top:362px">Comparaison</div>
<div class="a" style="left:19px;top:385px;width:11px;height:1px;background:repeating-linear-gradient(90deg,#808080 0 1px,transparent 1px 2px)"></div>
<div class="a" style="left:15px;top:381px;width:9px;height:9px;background:#fff;border:1px solid #808080"></div><svg class="ce" style="left:15px;top:381px" width="9" height="9" viewBox="0 0 9 9"><path d="M2 4.500h5" stroke="#000" stroke-width="1" fill="none"/><path d="M4.500 2v5" stroke="#000" stroke-width="1" fill="none"/></svg>
<svg style="left:30px;top:379px" width="16" height="14" viewBox="0 0 16 14"><path d="M.5 12.500V2.500l2-2h4l2 2h5.500v10z" fill="#ffff7a" stroke="#808080"/><path d="M1.500 11.500V3.500l1.500-2h3l2 2h5" stroke="#fff" fill="none"/><path d="M14.500 3v10M1 12.500h14" stroke="#000" fill="none"/><g transform="translate(-1,-2)"><path d="M3.5 7.5l2-3l2 3zM8.5 9.5l2 3l2-3z" stroke="#000" stroke-width="1" fill="none"/></g></svg>
<div class="t" style="transform:scaleX(0.9849);transform-origin:0 0;left:50px;top:378px">Conversion</div>
<div class="a" style="left:19px;top:401px;width:11px;height:1px;background:repeating-linear-gradient(90deg,#808080 0 1px,transparent 1px 2px)"></div>
<div class="a" style="left:15px;top:397px;width:9px;height:9px;background:#fff;border:1px solid #808080"></div><svg class="ce" style="left:15px;top:397px" width="9" height="9" viewBox="0 0 9 9"><path d="M2 4.500h5" stroke="#000" stroke-width="1" fill="none"/><path d="M4.500 2v5" stroke="#000" stroke-width="1" fill="none"/></svg>
<svg class="ce" style="left:30px;top:395px" width="16" height="14" viewBox="0 0 16 14"><path d="M.5 12.500V2.500l2-2h4l2 2h5.500v10z" fill="#ffff7a" stroke="#808080"/><path d="M1.500 11.500V3.500l1.500-2h3l2 2h5" stroke="#fff" fill="none"/><path d="M14.500 3v10M1 12.500h14" stroke="#000" fill="none"/><g transform="translate(-1,-2)"><text x="8" y="11.5" font-family="Liberation Sans,sans-serif" font-size="8.5" font-weight="bold" text-anchor="middle" fill="#000">+1</text></g></svg>
<div class="t" style="transform:scaleX(0.9869);transform-origin:0 0;left:50px;top:394px">Comptage</div>
<div class="a" style="left:19px;top:417px;width:11px;height:1px;background:repeating-linear-gradient(90deg,#808080 0 1px,transparent 1px 2px)"></div>
<div class="a" style="left:15px;top:413px;width:9px;height:9px;background:#fff;border:1px solid #808080"></div><svg class="ce" style="left:15px;top:413px" width="9" height="9" viewBox="0 0 9 9"><path d="M2 4.500h5" stroke="#000" stroke-width="1" fill="none"/><path d="M4.500 2v5" stroke="#000" stroke-width="1" fill="none"/></svg>
<svg class="ce" style="left:30px;top:411px" width="16" height="14" viewBox="0 0 16 14"><path d="M.5 12.500V2.500l2-2h4l2 2h5.500v10z" fill="#ffff7a" stroke="#808080"/><path d="M1.500 11.500V3.500l1.500-2h3l2 2h5" stroke="#fff" fill="none"/><path d="M14.500 3v10M1 12.500h14" stroke="#000" fill="none"/><g transform="translate(-1,-2)"><text x="8" y="11.5" font-family="Liberation Sans,sans-serif" font-size="7.5" font-weight="bold" text-anchor="middle" fill="#000">DB</text></g></svg>
<div class="t" style="transform:scaleX(0.9544);transform-origin:0 0;left:50px;top:410px">Appels de DB</div>
<div class="a" style="left:19px;top:433px;width:11px;height:1px;background:repeating-linear-gradient(90deg,#808080 0 1px,transparent 1px 2px)"></div>
<div class="a" style="left:15px;top:429px;width:9px;height:9px;background:#fff;border:1px solid #808080"></div><svg class="ce" style="left:15px;top:429px" width="9" height="9" viewBox="0 0 9 9"><path d="M2 4.500h5" stroke="#000" stroke-width="1" fill="none"/><path d="M4.500 2v5" stroke="#000" stroke-width="1" fill="none"/></svg>
<svg class="ce" style="left:30px;top:427px" width="16" height="14" viewBox="0 0 16 14"><path d="M.5 12.500V2.500l2-2h4l2 2h5.500v10z" fill="#ffff7a" stroke="#808080"/><path d="M1.500 11.500V3.500l1.500-2h3l2 2h5" stroke="#fff" fill="none"/><path d="M14.500 3v10M1 12.500h14" stroke="#000" fill="none"/><g transform="translate(-1,-2)"><path d="M4 6.5h6v4h-6zM10 10.5h3M12 9l1.5 1.5l-1.5 1.5" stroke="#000" stroke-width="1" fill="none"/></g></svg>
<div class="t" style="transform:scaleX(0.9950);transform-origin:0 0;left:50px;top:426px">Sauts</div>
<div class="a" style="left:19px;top:449px;width:11px;height:1px;background:repeating-linear-gradient(90deg,#808080 0 1px,transparent 1px 2px)"></div>
<div class="a" style="left:15px;top:445px;width:9px;height:9px;background:#fff;border:1px solid #808080"></div><svg class="ce" style="left:15px;top:445px" width="9" height="9" viewBox="0 0 9 9"><path d="M2 4.500h5" stroke="#000" stroke-width="1" fill="none"/><path d="M4.500 2v5" stroke="#000" stroke-width="1" fill="none"/></svg>
<svg class="ce" style="left:30px;top:443px" width="16" height="14" viewBox="0 0 16 14"><path d="M.5 12.500V2.500l2-2h4l2 2h5.500v10z" fill="#ffff7a" stroke="#808080"/><path d="M1.500 11.500V3.500l1.500-2h3l2 2h5" stroke="#fff" fill="none"/><path d="M14.500 3v10M1 12.500h14" stroke="#000" fill="none"/><g transform="translate(-1,-2)"><text x="8" y="11.5" font-family="Liberation Sans,sans-serif" font-size="8.5" font-weight="bold" text-anchor="middle" fill="#000">±I</text></g></svg>
<div class="t" style="transform:scaleX(0.9777);transform-origin:0 0;left:50px;top:442px">Nombres entiers</div>
<div class="a" style="left:19px;top:465px;width:11px;height:1px;background:repeating-linear-gradient(90deg,#808080 0 1px,transparent 1px 2px)"></div>
<div class="a" style="left:15px;top:461px;width:9px;height:9px;background:#fff;border:1px solid #808080"></div><svg class="ce" style="left:15px;top:461px" width="9" height="9" viewBox="0 0 9 9"><path d="M2 4.500h5" stroke="#000" stroke-width="1" fill="none"/><path d="M4.500 2v5" stroke="#000" stroke-width="1" fill="none"/></svg>
<svg class="ce" style="left:30px;top:459px" width="16" height="14" viewBox="0 0 16 14"><path d="M.5 12.500V2.500l2-2h4l2 2h5.500v10z" fill="#ffff7a" stroke="#808080"/><path d="M1.500 11.500V3.500l1.500-2h3l2 2h5" stroke="#fff" fill="none"/><path d="M14.500 3v10M1 12.500h14" stroke="#000" fill="none"/><g transform="translate(-1,-2)"><text x="8" y="11.5" font-family="Liberation Sans,sans-serif" font-size="8.5" font-weight="bold" text-anchor="middle" fill="#000">±R</text></g></svg>
<div class="t" style="transform:scaleX(0.9660);transform-origin:0 0;left:50px;top:458px">Nombres réels</div>
<div class="a" style="left:19px;top:481px;width:11px;height:1px;background:repeating-linear-gradient(90deg,#808080 0 1px,transparent 1px 2px)"></div>
<div class="a" style="left:15px;top:477px;width:9px;height:9px;background:#fff;border:1px solid #808080"></div><svg class="ce" style="left:15px;top:477px" width="9" height="9" viewBox="0 0 9 9"><path d="M2 4.500h5" stroke="#000" stroke-width="1" fill="none"/><path d="M4.500 2v5" stroke="#000" stroke-width="1" fill="none"/></svg>
<svg style="left:30px;top:475px" width="16" height="14" viewBox="0 0 16 14"><path d="M.5 12.500V2.500l2-2h4l2 2h5.500v10z" fill="#ffff7a" stroke="#808080"/><path d="M1.500 11.500V3.500l1.500-2h3l2 2h5" stroke="#fff" fill="none"/><path d="M14.500 3v10M1 12.500h14" stroke="#000" fill="none"/><g transform="translate(-1,-2)"><path d="M3 10.5c2-5 6-5 8 0M11 10.5h2" stroke="#000" stroke-width="1.2" fill="none"/></g></svg>
<div class="t" style="transform:scaleX(1.0502);transform-origin:0 0;left:50px;top:474px">Transfert</div>
<div class="a" style="left:19px;top:497px;width:11px;height:1px;background:repeating-linear-gradient(90deg,#808080 0 1px,transparent 1px 2px)"></div>
<div class="a" style="left:15px;top:493px;width:9px;height:9px;background:#fff;border:1px solid #808080"></div><svg class="ce" style="left:15px;top:493px" width="9" height="9" viewBox="0 0 9 9"><path d="M2 4.500h5" stroke="#000" stroke-width="1" fill="none"/><path d="M4.500 2v5" stroke="#000" stroke-width="1" fill="none"/></svg>
<svg class="ce" style="left:30px;top:491px" width="16" height="14" viewBox="0 0 16 14"><path d="M.5 12.500V2.500l2-2h4l2 2h5.500v10z" fill="#ffff7a" stroke="#808080"/><path d="M1.500 11.500V3.500l1.500-2h3l2 2h5" stroke="#fff" fill="none"/><path d="M14.500 3v10M1 12.500h14" stroke="#000" fill="none"/><g transform="translate(-1,-2)"><path d="M3 6.5h4M5.5 6v5M9 10.5h4M11.5 6v5" stroke="#000" stroke-width="1" fill="none"/><path d="M10 8l1.500-2l1.500 2zM4 9l1.500 2l1.500-2z" fill="#000" shape-rendering="auto"/></g></svg>
<div class="t" style="transform:scaleX(0.9689);transform-origin:0 0;left:50px;top:490px">Gestion de programme</div>
<div class="a" style="left:19px;top:513px;width:11px;height:1px;background:repeating-linear-gradient(90deg,#808080 0 1px,transparent 1px 2px)"></div>
<div class="a" style="left:15px;top:509px;width:9px;height:9px;background:#fff;border:1px solid #808080"></div><svg class="ce" style="left:15px;top:509px" width="9" height="9" viewBox="0 0 9 9"><path d="M2 4.500h5" stroke="#000" stroke-width="1" fill="none"/><path d="M4.500 2v5" stroke="#000" stroke-width="1" fill="none"/></svg>
<svg class="ce" style="left:30px;top:507px" width="16" height="14" viewBox="0 0 16 14"><path d="M.5 12.500V2.500l2-2h4l2 2h5.500v10z" fill="#ffff7a" stroke="#808080"/><path d="M1.500 11.500V3.500l1.500-2h3l2 2h5" stroke="#fff" fill="none"/><path d="M14.500 3v10M1 12.500h14" stroke="#000" fill="none"/><g transform="translate(-1,-2)"><path d="M3 5.5h10M3 7.5h10M3 10.5h10M4.5 9l-1.5 1.5l1.5 1.5M11.5 9l1.5 1.5l-1.5 1.5" stroke="#000" stroke-width="1" fill="none"/></g></svg>
<div class="t" style="transform:scaleX(1.0077);transform-origin:0 0;left:50px;top:506px">Décalage/rotation</div>
<div class="a" style="left:19px;top:529px;width:11px;height:1px;background:repeating-linear-gradient(90deg,#808080 0 1px,transparent 1px 2px)"></div>
<div class="a" style="left:15px;top:525px;width:9px;height:9px;background:#fff;border:1px solid #808080"></div><svg class="ce" style="left:15px;top:525px" width="9" height="9" viewBox="0 0 9 9"><path d="M2 4.500h5" stroke="#000" stroke-width="1" fill="none"/><path d="M4.500 2v5" stroke="#000" stroke-width="1" fill="none"/></svg>
<svg class="ce" style="left:30px;top:523px" width="16" height="14" viewBox="0 0 16 14"><path d="M.5 12.500V2.500l2-2h4l2 2h5.500v10z" fill="#ffff7a" stroke="#808080"/><path d="M1.500 11.500V3.500l1.500-2h3l2 2h5" stroke="#fff" fill="none"/><path d="M14.500 3v10M1 12.500h14" stroke="#000" fill="none"/><g transform="translate(-1,-2)"><path d="M2 8.5h3M5.5 5v7M7.5 5v7" stroke="#000" stroke-width="1" fill="none"/><text x="12" y="12" font-family="Liberation Sans,sans-serif" font-size="8" font-weight="bold" text-anchor="middle" fill="#000">?</text></g></svg>
<div class="t" style="transform:scaleX(1.0029);transform-origin:0 0;left:50px;top:522px">Bits du mot d'état</div>
<div class="a" style="left:19px;top:545px;width:11px;height:1px;background:repeating-linear-gradient(90deg,#808080 0 1px,transparent 1px 2px)"></div>
<div class="a" style="left:15px;top:541px;width:9px;height:9px;background:#fff;border:1px solid #808080"></div><svg class="ce" style="left:15px;top:541px" width="9" height="9" viewBox="0 0 9 9"><path d="M2 4.500h5" stroke="#000" stroke-width="1" fill="none"/><path d="M4.500 2v5" stroke="#000" stroke-width="1" fill="none"/></svg>
<svg style="left:30px;top:539px" width="16" height="14" viewBox="0 0 16 14"><path d="M.5 12.500V2.500l2-2h4l2 2h5.500v10z" fill="#ffff7a" stroke="#808080"/><path d="M1.500 11.500V3.500l1.500-2h3l2 2h5" stroke="#fff" fill="none"/><path d="M14.500 3v10M1 12.500h14" stroke="#000" fill="none"/><g transform="translate(-1,-2)"><circle cx="8" cy="8.5" r="3.5" fill="none" stroke="#000" stroke-width="1.3"/><path d="M8 6v2.5h2" stroke="#000" stroke-width="1" fill="none"/></g></svg>
<div class="t" style="transform:scaleX(0.9867);transform-origin:0 0;left:50px;top:538px">Temporisations</div>
<div class="a" style="left:19px;top:561px;width:11px;height:1px;background:repeating-linear-gradient(90deg,#808080 0 1px,transparent 1px 2px)"></div>
<div class="a" style="left:15px;top:557px;width:9px;height:9px;background:#fff;border:1px solid #808080"></div><svg class="ce" style="left:15px;top:557px" width="9" height="9" viewBox="0 0 9 9"><path d="M2 4.500h5" stroke="#000" stroke-width="1" fill="none"/><path d="M4.500 2v5" stroke="#000" stroke-width="1" fill="none"/></svg>
<svg class="ce" style="left:30px;top:555px" width="16" height="14" viewBox="0 0 16 14"><path d="M.5 12.500V2.500l2-2h4l2 2h5.500v10z" fill="#ffff7a" stroke="#808080"/><path d="M1.500 11.500V3.500l1.500-2h3l2 2h5" stroke="#fff" fill="none"/><path d="M14.500 3v10M1 12.500h14" stroke="#000" fill="none"/><g transform="translate(-1,-2)"><path d="M3 6.5h4M9 6.5h4M3 9.5h10M3 11.5h4M9 11.5h4" stroke="#000" stroke-width="1" fill="none"/></g></svg>
<div class="t" style="transform:scaleX(0.9894);transform-origin:0 0;left:50px;top:554px">Opérations sur mots</div>
<div class="a" style="left:19px;top:577px;width:11px;height:1px;background:repeating-linear-gradient(90deg,#808080 0 1px,transparent 1px 2px)"></div>
<div class="a" style="left:15px;top:573px;width:9px;height:9px;background:#fff;border:1px solid #808080"></div><svg class="ce" style="left:15px;top:573px" width="9" height="9" viewBox="0 0 9 9"><path d="M2 4.500h5" stroke="#000" stroke-width="1" fill="none"/><path d="M4.500 2v5" stroke="#000" stroke-width="1" fill="none"/></svg>
<svg class="ce" style="left:30px;top:571px" width="16" height="14" viewBox="0 0 16 14"><path d="M.5 12.500V2.500l2-2h4l2 2h5.500v10z" fill="#ffff7a" stroke="#808080"/><path d="M1.500 11.500V3.500l1.500-2h3l2 2h5" stroke="#fff" fill="none"/><path d="M14.500 3v10M1 12.500h14" stroke="#000" fill="none"/><g transform="translate(-1,-2)"><rect x="4.5" y="5.5" width="8" height="6" fill="#c0c0c0" stroke="#000080" stroke-width="1.4"/><path d="M2 7.5h2M2 9.5h2M13 8.5h2" stroke="#000080" stroke-width="1.4"/></g></svg>
<div class="t" style="transform:scaleX(0.9065);transform-origin:0 0;left:50px;top:570px">Blocs FB</div>
<div class="a" style="left:19px;top:593px;width:11px;height:1px;background:repeating-linear-gradient(90deg,#808080 0 1px,transparent 1px 2px)"></div>
<div class="a" style="left:15px;top:589px;width:9px;height:9px;background:#fff;border:1px solid #808080"></div><svg class="ce" style="left:15px;top:589px" width="9" height="9" viewBox="0 0 9 9"><path d="M2 4.500h5" stroke="#000" stroke-width="1" fill="none"/><path d="M4.500 2v5" stroke="#000" stroke-width="1" fill="none"/></svg>
<svg class="ce" style="left:30px;top:587px" width="16" height="14" viewBox="0 0 16 14"><path d="M.5 12.500V2.500l2-2h4l2 2h5.500v10z" fill="#ffff7a" stroke="#808080"/><path d="M1.500 11.500V3.500l1.500-2h3l2 2h5" stroke="#fff" fill="none"/><path d="M14.500 3v10M1 12.500h14" stroke="#000" fill="none"/><g transform="translate(-1,-2)"><rect x="4.5" y="5.5" width="8" height="6" fill="#c0c0c0" stroke="#000080" stroke-width="1.4"/><path d="M2 7.5h2M2 9.5h2M13 8.5h2" stroke="#000080" stroke-width="1.4"/></g></svg>
<div class="t" style="transform:scaleX(0.9120);transform-origin:0 0;left:50px;top:586px">Blocs FC</div>
<div class="a" style="left:19px;top:609px;width:11px;height:1px;background:repeating-linear-gradient(90deg,#808080 0 1px,transparent 1px 2px)"></div>
<div class="a" style="left:15px;top:605px;width:9px;height:9px;background:#fff;border:1px solid #808080"></div><svg class="ce" style="left:15px;top:605px" width="9" height="9" viewBox="0 0 9 9"><path d="M2 4.500h5" stroke="#000" stroke-width="1" fill="none"/><path d="M4.500 2v5" stroke="#000" stroke-width="1" fill="none"/></svg>
<svg class="ce" style="left:30px;top:603px" width="16" height="14" viewBox="0 0 16 14"><path d="M.5 12.500V2.500l2-2h4l2 2h5.500v10z" fill="#ffff7a" stroke="#808080"/><path d="M1.500 11.500V3.500l1.500-2h3l2 2h5" stroke="#fff" fill="none"/><path d="M14.500 3v10M1 12.500h14" stroke="#000" fill="none"/><g transform="translate(-1,-2)"><rect x="4.5" y="5.5" width="8" height="6" fill="#c0c0c0" stroke="#000080" stroke-width="1.4"/><path d="M2 7.5h2M2 9.5h2M13 8.5h2" stroke="#000080" stroke-width="1.4"/></g></svg>
<div class="t" style="transform:scaleX(0.8918);transform-origin:0 0;left:50px;top:602px">Blocs SFB</div>
<div class="a" style="left:19px;top:625px;width:11px;height:1px;background:repeating-linear-gradient(90deg,#808080 0 1px,transparent 1px 2px)"></div>
<div class="a" style="left:15px;top:621px;width:9px;height:9px;background:#fff;border:1px solid #808080"></div><svg class="ce" style="left:15px;top:621px" width="9" height="9" viewBox="0 0 9 9"><path d="M2 4.500h5" stroke="#000" stroke-width="1" fill="none"/><path d="M4.500 2v5" stroke="#000" stroke-width="1" fill="none"/></svg>
<svg class="ce" style="left:30px;top:619px" width="16" height="14" viewBox="0 0 16 14"><path d="M.5 12.500V2.500l2-2h4l2 2h5.500v10z" fill="#ffff7a" stroke="#808080"/><path d="M1.500 11.500V3.500l1.500-2h3l2 2h5" stroke="#fff" fill="none"/><path d="M14.500 3v10M1 12.500h14" stroke="#000" fill="none"/><g transform="translate(-1,-2)"><rect x="4.5" y="5.5" width="8" height="6" fill="#c0c0c0" stroke="#000080" stroke-width="1.4"/><path d="M2 7.5h2M2 9.5h2M13 8.5h2" stroke="#000080" stroke-width="1.4"/></g></svg>
<div class="t" style="transform:scaleX(0.9044);transform-origin:0 0;left:50px;top:618px">Blocs SFC</div>
<div class="a" style="left:19px;top:641px;width:11px;height:1px;background:repeating-linear-gradient(90deg,#808080 0 1px,transparent 1px 2px)"></div>
<svg style="left:30px;top:633px" width="16" height="15" viewBox="0 0 16 15"><path d="M1 14l3-10h3v10z" fill="#800080" stroke="#000" stroke-width=".6"/><path d="M4 14l2-11h3v11z" fill="#808080" stroke="#000" stroke-width=".6"/><path d="M8 14V3l3-1.500V14z" fill="#c00000" stroke="#000" stroke-width=".6"/><path d="M11 14V1.500l4-1.500V13z" fill="#0000c0" stroke="#000" stroke-width=".6"/></svg>
<div class="t" style="transform:scaleX(0.9815);transform-origin:0 0;left:50px;top:634px">Multi-instances</div>
<div class="a" style="left:19px;top:657px;width:11px;height:1px;background:repeating-linear-gradient(90deg,#808080 0 1px,transparent 1px 2px)"></div>
<div class="a" style="left:15px;top:653px;width:9px;height:9px;background:#fff;border:1px solid #808080"></div><svg class="ce" style="left:15px;top:653px" width="9" height="9" viewBox="0 0 9 9"><path d="M2 4.500h5" stroke="#000" stroke-width="1" fill="none"/></svg>
<svg style="left:30px;top:649px" width="16" height="15" viewBox="0 0 16 15"><path d="M2 14V4l3-2v12z" fill="#ffff00" stroke="#808000" stroke-width=".6"/><path d="M5 14V2l2 0v12z" fill="#ffff00" stroke="#808000" stroke-width=".6"/><path d="M8 14V3l2-1v12z" fill="#408080" stroke="#000" stroke-width=".6"/><path d="M10 14V2l4-2V12z" fill="#0000a0" stroke="#000" stroke-width=".6"/><path d="M7.5 2v12M3 11h2" stroke="#000" stroke-width=".8"/></svg>
<div class="t" style="transform:scaleX(0.9688);transform-origin:0 0;left:50px;top:650px">Bibliothèques</div>
<div class="a" style="left:38px;top:673px;width:12px;height:1px;background:repeating-linear-gradient(90deg,#808080 0 1px,transparent 1px 2px)"></div>
<div class="a" style="left:34px;top:669px;width:9px;height:9px;background:#fff;border:1px solid #808080"></div><svg class="ce" style="left:34px;top:669px" width="9" height="9" viewBox="0 0 9 9"><path d="M2 4.500h5" stroke="#000" stroke-width="1" fill="none"/><path d="M4.500 2v5" stroke="#000" stroke-width="1" fill="none"/></svg>
<svg style="left:50px;top:665px" width="16" height="15" viewBox="0 0 16 15"><path d="M1 5.5L8 1.5l7 5l-7 4.5z" fill="#00e000" stroke="#000" stroke-linejoin="round"/><path d="M1 5.5v3l7 5.5v-3z" fill="#008000" stroke="#000" stroke-linejoin="round"/><path d="M8 11l7-4.5v3L8 14z" fill="#fff" stroke="#000" stroke-linejoin="round"/><path d="M9 12l5.500-3.500M9 13l5.500-3.500" stroke="#808080" stroke-width=".7"/></svg>
<div class="t" style="transform:scaleX(0.9972);transform-origin:0 0;left:69px;top:666px">stdlibs</div>
<div class="a" style="left:38px;top:689px;width:12px;height:1px;background:repeating-linear-gradient(90deg,#808080 0 1px,transparent 1px 2px)"></div>
<div class="a" style="left:34px;top:685px;width:9px;height:9px;background:#fff;border:1px solid #808080"></div><svg class="ce" style="left:34px;top:685px" width="9" height="9" viewBox="0 0 9 9"><path d="M2 4.500h5" stroke="#000" stroke-width="1" fill="none"/><path d="M4.500 2v5" stroke="#000" stroke-width="1" fill="none"/></svg>
<svg style="left:50px;top:681px" width="16" height="15" viewBox="0 0 16 15"><path d="M1 5.5L8 1.5l7 5l-7 4.5z" fill="#00e000" stroke="#000" stroke-linejoin="round"/><path d="M1 5.5v3l7 5.5v-3z" fill="#008000" stroke="#000" stroke-linejoin="round"/><path d="M8 11l7-4.5v3L8 14z" fill="#fff" stroke="#000" stroke-linejoin="round"/><path d="M9 12l5.500-3.500M9 13l5.500-3.500" stroke="#808080" stroke-width=".7"/></svg>
<div class="t" style="transform:scaleX(0.9935);transform-origin:0 0;left:69px;top:682px">Standard Library</div>
<div class="a" style="left:38px;top:705px;width:12px;height:1px;background:repeating-linear-gradient(90deg,#808080 0 1px,transparent 1px 2px)"></div>
<div class="a" style="left:34px;top:701px;width:9px;height:9px;background:#fff;border:1px solid #808080"></div><svg class="ce" style="left:34px;top:701px" width="9" height="9" viewBox="0 0 9 9"><path d="M2 4.500h5" stroke="#000" stroke-width="1" fill="none"/><path d="M4.500 2v5" stroke="#000" stroke-width="1" fill="none"/></svg>
<svg style="left:50px;top:697px" width="16" height="15" viewBox="0 0 16 15"><path d="M1 5.5L8 1.5l7 5l-7 4.5z" fill="#00e000" stroke="#000" stroke-linejoin="round"/><path d="M1 5.5v3l7 5.5v-3z" fill="#008000" stroke="#000" stroke-linejoin="round"/><path d="M8 11l7-4.5v3L8 14z" fill="#fff" stroke="#000" stroke-linejoin="round"/><path d="M9 12l5.500-3.500M9 13l5.500-3.500" stroke="#808080" stroke-width=".7"/></svg>
<div class="t" style="transform:scaleX(0.9302);transform-origin:0 0;left:69px;top:698px">SIMATIC_NET_CP</div>
<div class="a" style="left:38px;top:721px;width:12px;height:1px;background:repeating-linear-gradient(90deg,#808080 0 1px,transparent 1px 2px)"></div>
<div class="a" style="left:34px;top:717px;width:9px;height:9px;background:#fff;border:1px solid #808080"></div><svg class="ce" style="left:34px;top:717px" width="9" height="9" viewBox="0 0 9 9"><path d="M2 4.500h5" stroke="#000" stroke-width="1" fill="none"/><path d="M4.500 2v5" stroke="#000" stroke-width="1" fill="none"/></svg>
<svg style="left:50px;top:713px" width="16" height="15" viewBox="0 0 16 15"><path d="M1 5.5L8 1.5l7 5l-7 4.5z" fill="#00e000" stroke="#000" stroke-linejoin="round"/><path d="M1 5.5v3l7 5.5v-3z" fill="#008000" stroke="#000" stroke-linejoin="round"/><path d="M8 11l7-4.5v3L8 14z" fill="#fff" stroke="#000" stroke-linejoin="round"/><path d="M9 12l5.500-3.500M9 13l5.500-3.500" stroke="#808080" stroke-width=".7"/></svg>
<div class="t" style="transform:scaleX(0.9599);transform-origin:0 0;left:69px;top:714px">Redundant IO CGP V40</div>
<div class="a" style="left:38px;top:737px;width:12px;height:1px;background:repeating-linear-gradient(90deg,#808080 0 1px,transparent 1px 2px)"></div>
<div class="a" style="left:34px;top:733px;width:9px;height:9px;background:#fff;border:1px solid #808080"></div><svg class="ce" style="left:34px;top:733px" width="9" height="9" viewBox="0 0 9 9"><path d="M2 4.500h5" stroke="#000" stroke-width="1" fill="none"/><path d="M4.500 2v5" stroke="#000" stroke-width="1" fill="none"/></svg>
<svg style="left:50px;top:729px" width="16" height="15" viewBox="0 0 16 15"><path d="M1 5.5L8 1.5l7 5l-7 4.5z" fill="#00e000" stroke="#000" stroke-linejoin="round"/><path d="M1 5.5v3l7 5.5v-3z" fill="#008000" stroke="#000" stroke-linejoin="round"/><path d="M8 11l7-4.5v3L8 14z" fill="#fff" stroke="#000" stroke-linejoin="round"/><path d="M9 12l5.500-3.500M9 13l5.500-3.500" stroke="#808080" stroke-width=".7"/></svg>
<div class="t" style="transform:scaleX(0.9576);transform-origin:0 0;left:69px;top:730px">Redundant IO MGP V32</div>
<div class="a" style="left:38px;top:753px;width:12px;height:1px;background:repeating-linear-gradient(90deg,#808080 0 1px,transparent 1px 2px)"></div>
<div class="a" style="left:34px;top:749px;width:9px;height:9px;background:#fff;border:1px solid #808080"></div><svg class="ce" style="left:34px;top:749px" width="9" height="9" viewBox="0 0 9 9"><path d="M2 4.500h5" stroke="#000" stroke-width="1" fill="none"/><path d="M4.500 2v5" stroke="#000" stroke-width="1" fill="none"/></svg>
<svg style="left:50px;top:745px" width="16" height="15" viewBox="0 0 16 15"><path d="M1 5.5L8 1.5l7 5l-7 4.5z" fill="#00e000" stroke="#000" stroke-linejoin="round"/><path d="M1 5.5v3l7 5.5v-3z" fill="#008000" stroke="#000" stroke-linejoin="round"/><path d="M8 11l7-4.5v3L8 14z" fill="#fff" stroke="#000" stroke-linejoin="round"/><path d="M9 12l5.500-3.500M9 13l5.500-3.500" stroke="#808080" stroke-width=".7"/></svg>
<div class="t" style="transform:scaleX(0.9039);transform-origin:0 0;left:69px;top:746px">GRAPH7</div>
<div class="a" style="left:38px;top:769px;width:12px;height:1px;background:repeating-linear-gradient(90deg,#808080 0 1px,transparent 1px 2px)"></div>
<div class="a" style="left:34px;top:765px;width:9px;height:9px;background:#fff;border:1px solid #808080"></div><svg class="ce" style="left:34px;top:765px" width="9" height="9" viewBox="0 0 9 9"><path d="M2 4.500h5" stroke="#000" stroke-width="1" fill="none"/><path d="M4.500 2v5" stroke="#000" stroke-width="1" fill="none"/></svg>
<svg style="left:50px;top:761px" width="16" height="15" viewBox="0 0 16 15"><path d="M1 5.5L8 1.5l7 5l-7 4.5z" fill="#00e000" stroke="#000" stroke-linejoin="round"/><path d="M1 5.5v3l7 5.5v-3z" fill="#008000" stroke="#000" stroke-linejoin="round"/><path d="M8 11l7-4.5v3L8 14z" fill="#fff" stroke="#000" stroke-linejoin="round"/><path d="M9 12l5.500-3.500M9 13l5.500-3.500" stroke="#808080" stroke-width=".7"/></svg>
<div class="t" style="transform:scaleX(0.9599);transform-origin:0 0;left:69px;top:762px">Redundant IO CGP V52</div>
<div class="a" style="left:5px;top:1004px;width:189px;height:1px;background:#000"></div>
<div class="a face" style="left:13px;top:1003px;width:62px;height:26px;border-left:1px solid #fff;border-right:1px solid #000;border-bottom:1px solid #000;border-radius:0 0 3px 3px;box-shadow:inset -1px -1px 0 #808080"></div>
<div class="a" style="left:75px;top:1005px;width:49px;height:21px;border-left:1px solid #fff;border-right:1px solid #000;border-bottom:1px solid #000;border-radius:0 0 3px 3px;box-shadow:inset -1px -1px 0 #808080"></div>
<div class="a" style="left:124px;top:1005px;width:60px;height:21px;border-left:1px solid #fff;border-right:1px solid #000;border-bottom:1px solid #000;border-radius:0 0 3px 3px;box-shadow:inset -1px -1px 0 #808080"></div>
<svg class="ce" style="left:19px;top:1007px" width="17" height="15" viewBox="0 0 17 15"><path d="M9.500 2.500h4l2.500 2.500v8h-6.500z" fill="#fff" stroke="#000"/><rect x=".5" y="1.500" width="3" height="12" fill="#fff" stroke="#000"/><rect x="3" y=".5" width="6" height="14" fill="#ffff00" stroke="#000" stroke-width="1.500"/><rect x="5" y="3" width="2" height="2" fill="#fff" stroke="#000" stroke-width=".5"/><rect x="5" y="7" width="2" height="2" fill="#0000ff"/><rect x="5" y="11" width="2" height="2" fill="#0000ff"/></svg>
<div class="t" style="left:38px;top:1009px">Elé...</div>
<svg class="ce" style="left:78px;top:1006px" width="16" height="15" viewBox="0 0 16 15"><path d="M1.500 1v13M1.500 5.500h3M1.500 9.500h3M1.500 13.500h3M5 1.500h5M9 5.500h6M9 9.500h6M9 13.500h6" stroke="#000" stroke-width="1" fill="none"/><rect x=".5" y=".5" width="2" height="2" fill="#fff" stroke="#000"/><rect x="4.500" y="4.500" width="2" height="2" fill="#fff" stroke="#000"/><rect x="4.500" y="8.500" width="2" height="2" fill="#fff" stroke="#000"/><rect x="4.500" y="12.500" width="2" height="2" fill="#fff" stroke="#000"/></svg>
<div class="t" style="left:96px;top:1008px">Str...</div>
<svg class="ce" style="left:132px;top:1006px" width="14" height="15" viewBox="0 0 14 15"><path d="M6 2h8v2h-8zM6 6h8v2h-8zM6 10h8v2h-8zM6 14h8v1h-8z" fill="#fff"/><path d="M5 1.500h9M5 5.500h9M5 9.500h9M5 13.500h9" stroke="#000" stroke-width="1" fill="none"/><rect x=".5" y=".5" width="2" height="2" fill="#fff" stroke="#000"/><rect x=".5" y="4.500" width="2" height="2" fill="#fff" stroke="#000"/><rect x=".5" y="8.500" width="2" height="2" fill="#fff" stroke="#000"/><rect x=".5" y="12.500" width="2" height="2" fill="#fff" stroke="#000"/></svg>
<div class="t" style="left:149px;top:1008px">Rés...</div>
<!-- ===== status bar ===== -->
<div class="a face" style="left:0;top:1032px;width:1920px;height:19px"></div>
<div class="a" style="left:0;top:1031px;width:1920px;height:1px;background:#fff"></div>
<div class="t" style="transform:scaleX(0.9830);transform-origin:0 0;left:1px;top:1035px">Pour obtenir de l'aide, appuyez sur F1.</div>
<div class="sunk1" style="left:1475px;top:1034px;width:32px;height:16px"></div>
<svg style="left:1508px;top:1034px" width="16" height="16" viewBox="0 0 16 16"><path d="M8 1L15 8L8 15L1 8z" fill="#fff" stroke="#000080" stroke-width="1.2"/><rect x="7" y="5" width="2.500" height="6" fill="#000080"/></svg>
<div class="sunk1" style="left:1526px;top:1034px;width:84px;height:16px"></div>
<div class="a" style="left:1527px;top:1035px;width:67px;height:14px;background:#0f0"></div>
<div class="t" style="transform:scaleX(0.9017);transform-origin:0 0;left:1528px;top:1035px">RUN</div>
<div class="sunk1" style="left:1612px;top:1034px;width:62px;height:16px"></div>
<div class="t" style="transform:scaleX(1.0150);transform-origin:0 0;left:1614px;top:1035px">Abs &lt; 5.2</div>
<div class="sunk1" style="left:1677px;top:1034px;width:96px;height:16px"></div>
<div class="t" style="transform:scaleX(0.9677);transform-origin:0 0;left:1679px;top:1035px">Ré 2</div>
<div class="sunk1" style="left:1775px;top:1034px;width:32px;height:16px"></div>
<div class="t" style="transform:scaleX(0.9127);transform-origin:0 0;left:1777px;top:1035px">Lec</div>
<div class="sunk1" style="left:1810px;top:1034px;width:30px;height:16px"></div>
<div class="t" style="transform:scaleX(0.9717);transform-origin:0 0;left:1812px;top:1035px">Mod</div>
<div class="sunk1" style="left:1842px;top:1034px;width:78px;height:16px"></div>
<!-- ===== top edge of the Windows taskbar ===== -->
<div class="a" style="left:0;top:1051px;width:1920px;height:1px;background:#fff"></div>
<div class="a face" style="left:0;top:1052px;width:1920px;height:8px"></div>
<div class="btn" style="left:2px;top:1054px;width:78px;height:22px"></div>
<div class="a" style="left:6px;top:1058px;width:6px;height:2px;background:#e8541c;border-radius:3px 3px 0 0"></div>
<div class="a" style="left:13px;top:1059px;width:5px;height:1px;background:#5eb83c"></div>
<div class="a" style="left:87px;top:1056px;width:2px;height:4px;border-left:1px solid #fff;border-right:1px solid #808080"></div>
<div class="a" style="left:100px;top:1058px;width:10px;height:2px;background:#3a8ee6"></div>
<div class="a" style="left:120px;top:1058px;width:16px;height:2px;background:#606060"></div>
<div class="a" style="left:146px;top:1056px;width:2px;height:4px;border-left:1px solid #fff;border-right:1px solid #808080"></div>
<div class="btn" style="left:153px;top:1054px;width:159px;height:22px"></div>
<div class="a" style="left:165px;top:1058px;width:6px;height:2px;background:#000;border-radius:3px 3px 0 0"></div>
<div class="a dith" style="left:316px;top:1054px;width:160px;height:22px;box-shadow:inset 1px 1px 0 #404040,inset 2px 2px 0 #808080,inset -1px -1px 0 #fff"></div>
<div class="btn" style="left:479px;top:1054px;width:160px;height:22px"></div>
<div class="btn" style="left:642px;top:1054px;width:160px;height:22px"></div>
<div class="a" style="left:321px;top:1058px;width:1px;height:2px;background:#000"></div>
<div class="a" style="left:323px;top:1058px;width:13px;height:2px;background:#c0c0c0"></div>
<div class="a" style="left:326px;top:1058px;width:1px;height:2px;background:#000"></div>
<div class="a" style="left:333px;top:1059px;width:1px;height:1px;background:#000"></div>
<div class="a" style="left:483px;top:1057px;width:6px;height:3px;background:#c0c0c0"></div>
<div class="a" style="left:489px;top:1057px;width:10px;height:3px;background:#fff;border:1px solid #000;border-bottom:0"></div>
<div class="a" style="left:492px;top:1059px;width:5px;height:1px;background:#0ff"></div>
<div class="a" style="left:646px;top:1057px;width:11px;height:1px;background:#000"></div>
<div class="a" style="left:646px;top:1058px;width:11px;height:1px;background:#fff"></div>
<div class="a" style="left:646px;top:1059px;width:11px;height:1px;background:#c0c0c0"></div>
<div class="a" style="left:659px;top:1057px;width:1px;height:1px;background:#000"></div><div class="a" style="left:661px;top:1057px;width:1px;height:1px;background:#000"></div>
<div class="a" style="left:660px;top:1058px;width:1px;height:1px;background:#000"></div>
<div class="a" style="left:659px;top:1059px;width:1px;height:1px;background:#000"></div><div class="a" style="left:661px;top:1059px;width:1px;height:1px;background:#000"></div>
<div class="a" style="left:1832px;top:1056px;width:3px;height:4px;border-left:2px solid #fff;border-right:1px solid #808080"></div>
<div class="a" style="left:1843px;top:1058px;width:12px;height:2px;background:#0a246a"></div>
<div class="sunk1" style="left:1859px;top:1054px;width:59px;height:22px"></div>
</div>
</body>
</html>
